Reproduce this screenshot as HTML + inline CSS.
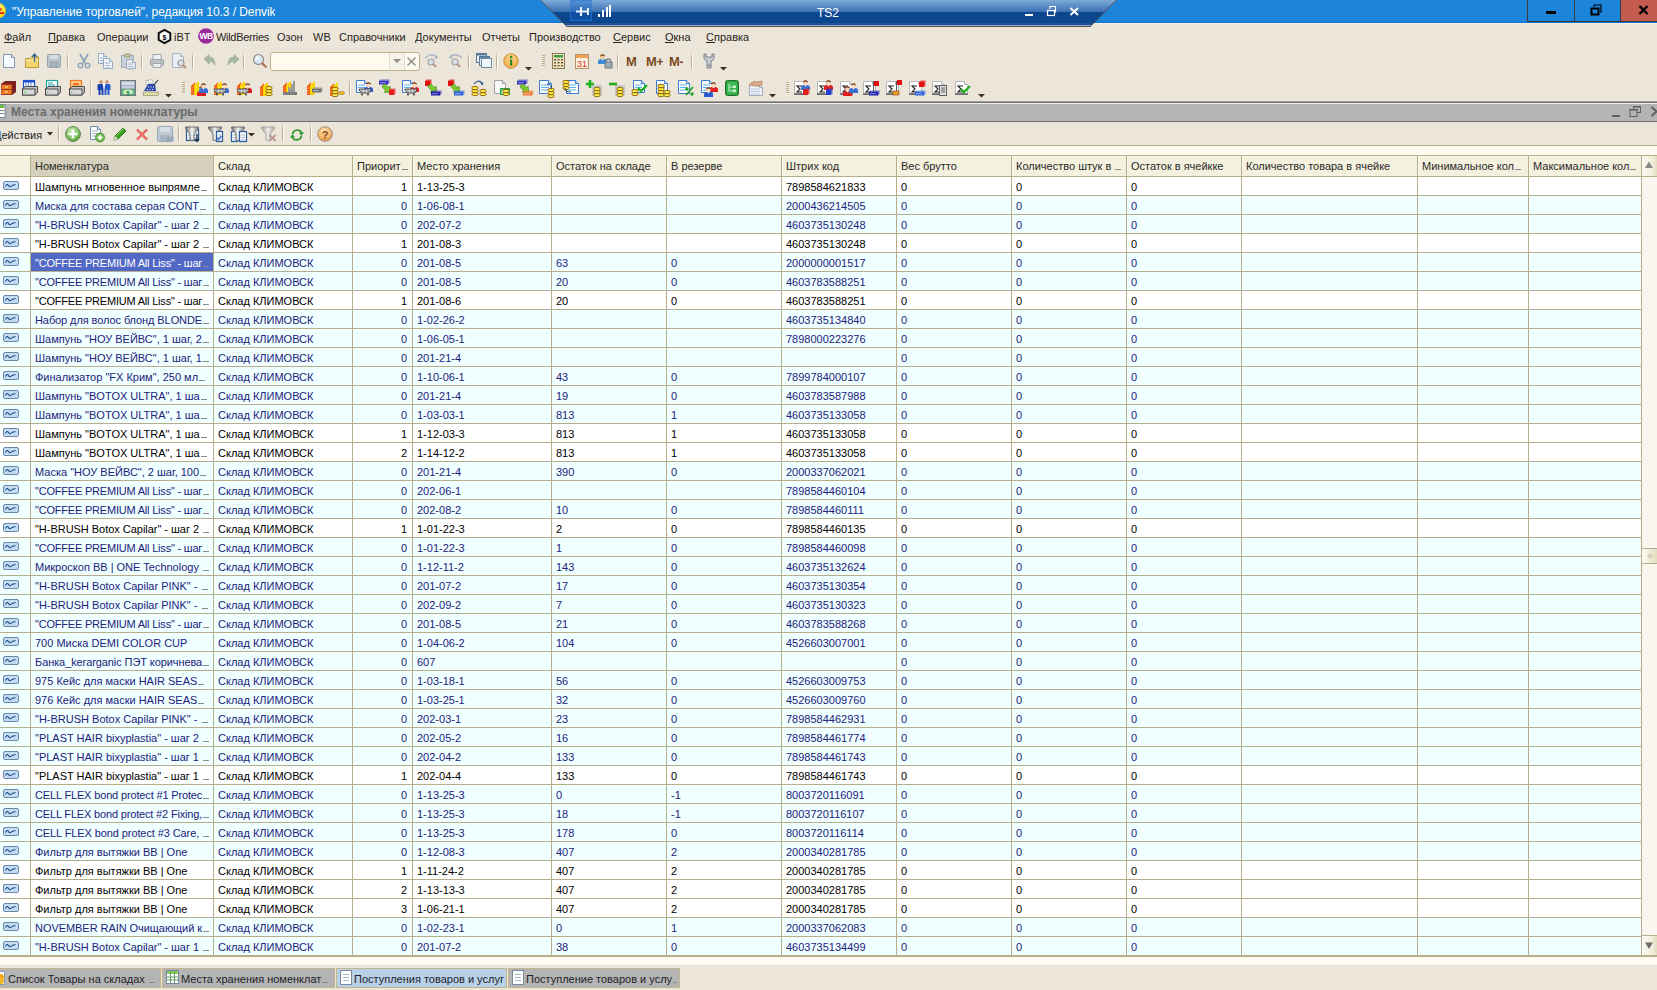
<!DOCTYPE html><html><head><meta charset="utf-8"><style>
*{margin:0;padding:0;box-sizing:border-box}
html,body{width:1657px;height:990px;overflow:hidden;background:#ECE6DA;font-family:"Liberation Sans",sans-serif;font-size:11px;color:#000}
.a{position:absolute}
.t{position:absolute;white-space:nowrap;overflow:hidden;line-height:19px}
svg{position:absolute;overflow:visible}
.el{display:inline-block;width:6px;height:1px;margin-left:1px;background:#8A8A8A;vertical-align:baseline}
</style></head><body>

<div class="a" style="left:0;top:0;width:1657px;height:22px;background:#1C84D9"></div>
<div class="a" style="left:0;top:22px;width:1657px;height:1px;background:#0D74CF"></div>
<div class="a" style="left:0;top:23px;width:1657px;height:1px;background:#F6EDDC"></div>
<svg style="left:0;top:0" width="12" height="22"><defs><radialGradient id="ai" cx="0.3" cy="0.25" r="0.8"><stop offset="0" stop-color="#FFF8B0"/><stop offset="1" stop-color="#FFD800"/></radialGradient></defs><circle cx="-2" cy="10.7" r="7.6" fill="url(#ai)" stroke="#D8C040" stroke-width="0.6"/><rect x="-6" y="12" width="10" height="2" fill="#E83010"/><ellipse cx="-0.3" cy="9.4" rx="2.2" ry="1.6" fill="#E85020"/></svg>
<div class="t" style="left:12px;top:1px;height:22px;line-height:22px;font-size:12px;color:#fff;letter-spacing:-0.07px">"Управление торговлей", редакция 10.3 / Denvik</div>
<svg style="left:540px;top:0" width="590" height="28">
<defs><linearGradient id="ts" x1="0" y1="0" x2="0" y2="27" gradientUnits="userSpaceOnUse">
<stop offset="0" stop-color="#7EAAD9"/><stop offset="0.44" stop-color="#3C71B3"/><stop offset="0.45" stop-color="#0B468F"/><stop offset="0.84" stop-color="#0B468F"/><stop offset="0.85" stop-color="#244F90"/><stop offset="1" stop-color="#244F90"/></linearGradient></defs>
<path d="M0,0 L577,0 L550,27 L27,27 Z" fill="url(#ts)"/>
<line x1="26" y1="25.5" x2="551" y2="25.5" stroke="#8EAED8" stroke-width="1"/>
<path d="M0.5,0 L27,26.5 L550,26.5 L576.5,0" fill="none" stroke="#4E4E4E" stroke-width="1"/>
<rect x="30.5" y="0.5" width="21" height="20" fill="#1060C8" fill-opacity="0.35" stroke="#2A7AD8" stroke-opacity="0.7" stroke-width="1"/>
<path d="M36,11.5 H48 M41,7 V16 M48,8 V15" stroke="#E8F0FA" stroke-width="2" fill="none"/>
<rect x="58" y="14" width="2" height="3" fill="#fff"/><rect x="62" y="10" width="2" height="7" fill="#fff"/><rect x="66" y="7" width="2" height="10" fill="#fff"/><rect x="69" y="5" width="2" height="12" fill="#fff"/>
<rect x="485" y="14" width="8" height="2" fill="#fff"/>
<rect x="507.5" y="10.5" width="7" height="5" fill="none" stroke="#fff" stroke-width="1.2"/><path d="M510,9 V6.5 H515.5 V12 H514" fill="none" stroke="#fff" stroke-width="1.2"/>
<path d="M530.5,8 L538,15 M538,8 L530.5,15" stroke="#fff" stroke-width="2"/>
</svg>
<div class="t" style="left:817px;top:1px;height:24px;line-height:24px;font-size:12px;color:#fff">TS2</div>
<div class="a" style="left:1527px;top:0;width:48px;height:22px;background:#1C84D9;border:1px solid #3A3A3A;border-top:none"></div>
<div class="a" style="left:1575px;top:0;width:46px;height:22px;background:#1C84D9;border:1px solid #3A3A3A;border-top:none;border-left:none"></div>
<div class="a" style="left:1621px;top:0;width:36px;height:22px;background:#C45B50;border-bottom:1px solid #3A3A3A"></div>
<div class="a" style="left:1546px;top:11px;width:10px;height:3px;background:#000"></div>
<svg style="left:1590px;top:4px" width="14" height="12"><rect x="1.5" y="4.5" width="7" height="6" fill="none" stroke="#000" stroke-width="2"/><path d="M4,3 V1 H11 V8 H10" fill="none" stroke="#000" stroke-width="1.2"/></svg>
<svg style="left:1638px;top:5px" width="12" height="10"><path d="M1.5,1 L9.5,9 M9.5,1 L1.5,9" stroke="#000" stroke-width="2.4"/></svg>
<div class="t" style="left:4px;top:28px;height:19px;line-height:19px;color:#2A241A;">Файл</div>
<div class="a" style="left:4px;top:42px;width:11px;height:1px;background:#2A241A"></div>
<div class="t" style="left:48px;top:28px;height:19px;line-height:19px;color:#2A241A;">Правка</div>
<div class="a" style="left:48px;top:42px;width:9px;height:1px;background:#2A241A"></div>
<div class="t" style="left:97px;top:28px;height:19px;line-height:19px;color:#2A241A;">Операции</div>
<div class="t" style="left:174px;top:28px;height:19px;line-height:19px;color:#2A241A;">iBT</div>
<div class="t" style="left:216px;top:28px;height:19px;line-height:19px;color:#2A241A;letter-spacing:-0.3px;">WildBerries</div>
<div class="t" style="left:277px;top:28px;height:19px;line-height:19px;color:#2A241A;">Озон</div>
<div class="t" style="left:313px;top:28px;height:19px;line-height:19px;color:#2A241A;">WB</div>
<div class="t" style="left:339px;top:28px;height:19px;line-height:19px;color:#2A241A;">Справочники</div>
<div class="t" style="left:415px;top:28px;height:19px;line-height:19px;color:#2A241A;">Документы</div>
<div class="t" style="left:482px;top:28px;height:19px;line-height:19px;color:#2A241A;">Отчеты</div>
<div class="t" style="left:529px;top:28px;height:19px;line-height:19px;color:#2A241A;">Производство</div>
<div class="t" style="left:613px;top:28px;height:19px;line-height:19px;color:#2A241A;">Сервис</div>
<div class="a" style="left:613px;top:42px;width:9px;height:1px;background:#2A241A"></div>
<div class="t" style="left:665px;top:28px;height:19px;line-height:19px;color:#2A241A;">Окна</div>
<div class="a" style="left:665px;top:42px;width:9px;height:1px;background:#2A241A"></div>
<div class="t" style="left:706px;top:28px;height:19px;line-height:19px;color:#2A241A;">Справка</div>
<div class="a" style="left:706px;top:42px;width:9px;height:1px;background:#2A241A"></div>
<svg style="left:157px;top:29px" width="15" height="15"><path d="M7.5,0.8 L13.3,4 L13.3,11 L7.5,14.2 L1.7,11 L1.7,4 Z" fill="#fff" stroke="#111" stroke-width="2"/><text x="7.5" y="10.5" font-size="7" text-anchor="middle" font-family="Liberation Sans" font-weight="bold">$</text></svg>
<svg style="left:198px;top:28px" width="16" height="16"><circle cx="8" cy="8" r="7.8" fill="#9B2A9E"/><text x="8" y="11.3" font-size="8.5" text-anchor="middle" fill="#fff" font-family="Liberation Sans" font-weight="bold" letter-spacing="-0.6">WB</text></svg>
<svg style="left:2px;top:53px" width="16" height="16" viewBox="0 0 16 16"><path d="M1.5,1.5 H9.5 L12.5,4.5 V14.5 H1.5Z" fill="#F6FAFE" stroke="#7E9AB8"/><path d="M9.5,1.5 V4.5 H12.5" fill="#D8E4F0" stroke="#7E9AB8"/></svg>
<svg style="left:24px;top:53px" width="16" height="16" viewBox="0 0 16 16"><path d="M1.5,5.5 H6 L7.5,4 H14.5 V14.5 H1.5Z" fill="#F2D46E" stroke="#BC9A3A"/><path d="M1.5,7.5 H14.5" stroke="#FBE9A8"/><path d="M10.5,9 V1.5 M8,4 L10.5,1 L13,4" fill="none" stroke="#3A6898" stroke-width="1.3"/></svg>
<svg style="left:46px;top:53px" width="16" height="16" viewBox="0 0 16 16"><rect x="1.5" y="1.5" width="13" height="13" rx="1" fill="#B9C4CC" stroke="#9AA6AE"/><rect x="4" y="2" width="8" height="4" fill="#D4DCE2"/><rect x="4" y="9" width="8" height="5" fill="#A9B4BC" stroke="#98A4AC"/></svg>
<div class="a" style="left:67px;top:52px;width:1px;height:20px;background:linear-gradient(#ECE6DA,#B8AE8C 30%,#B8AE8C 70%,#ECE6DA)"></div><div class="a" style="left:68px;top:52px;width:1px;height:20px;background:linear-gradient(#ECE6DA,#FFFFFF 30%,#FFFFFF 70%,#ECE6DA)"></div>
<svg style="left:76px;top:53px" width="16" height="16" viewBox="0 0 16 16"><path d="M4,1 L9,10 M12,1 L7,10" stroke="#8FA4B8" stroke-width="1.8"/><circle cx="4.5" cy="12.5" r="2.3" fill="none" stroke="#8FA4B8" stroke-width="1.4"/><circle cx="11.5" cy="12.5" r="2.3" fill="none" stroke="#8FA4B8" stroke-width="1.4"/></svg>
<svg style="left:97px;top:53px" width="16" height="16" viewBox="0 0 16 16"><path d="M1.5,0.5 H6.5 L9.5,3.5 V10.5 H1.5Z" fill="#F4F8FC" stroke="#98AEC4"/><path d="M6.5,0.5 V3.5 H9.5" fill="#D8E4F0" stroke="#98AEC4"/><path d="M3,5.0 H7" stroke="#98AEC4" stroke-width="1"/><path d="M3,7.5 H7" stroke="#98AEC4" stroke-width="1"/><path d="M3,10.0 H7" stroke="#98AEC4" stroke-width="1"/><path d="M6.5,5.5 H12.5 L15.5,8.5 V15.5 H6.5Z" fill="#F4F8FC" stroke="#98AEC4"/><path d="M12.5,5.5 V8.5 H15.5" fill="#D8E4F0" stroke="#98AEC4"/><path d="M8,10.0 H13" stroke="#98AEC4" stroke-width="1"/><path d="M8,12.5 H13" stroke="#98AEC4" stroke-width="1"/><path d="M8,15.0 H13" stroke="#98AEC4" stroke-width="1"/></svg>
<svg style="left:120px;top:53px" width="16" height="16" viewBox="0 0 16 16"><rect x="1.5" y="2.5" width="12" height="12" fill="#C8D2DA" stroke="#9AAAB8"/><rect x="5" y="1" width="5" height="3" fill="#D8C8A0" stroke="#9A9A80"/><path d="M6.5,6.5 H12.5 L15.5,9.5 V15.5 H6.5Z" fill="#E4EAF0" stroke="#9AAAB8"/><path d="M12.5,6.5 V9.5 H15.5" fill="#D8E4F0" stroke="#9AAAB8"/><path d="M8,11.0 H13" stroke="#B0BCC8" stroke-width="1"/><path d="M8,13.5 H13" stroke="#B0BCC8" stroke-width="1"/><path d="M8,16.0 H13" stroke="#B0BCC8" stroke-width="1"/></svg>
<div class="a" style="left:141px;top:52px;width:1px;height:20px;background:linear-gradient(#ECE6DA,#B8AE8C 30%,#B8AE8C 70%,#ECE6DA)"></div><div class="a" style="left:142px;top:52px;width:1px;height:20px;background:linear-gradient(#ECE6DA,#FFFFFF 30%,#FFFFFF 70%,#ECE6DA)"></div>
<svg style="left:149px;top:53px" width="16" height="16" viewBox="0 0 16 16"><rect x="4" y="1.5" width="8" height="5" fill="#F0F0F0" stroke="#A0A8B0"/><rect x="1.5" y="6.5" width="13" height="6" rx="1" fill="#C0C4C8" stroke="#9AA0A8"/><rect x="4" y="10.5" width="8" height="4" fill="#F0F0F0" stroke="#A0A8B0"/><circle cx="12" cy="8.5" r="0.7" fill="#6C6"/></svg>
<svg style="left:171px;top:53px" width="16" height="16" viewBox="0 0 16 16"><path d="M1.5,0.5 H9.5 L12.5,3.5 V14.5 H1.5Z" fill="#E8EEF2" stroke="#A8B6C4"/><path d="M9.5,0.5 V3.5 H12.5" fill="#D8E4F0" stroke="#A8B6C4"/><circle cx="10" cy="10" r="3" fill="#D8E4EE" stroke="#A09080" stroke-width="1.2"/><path d="M12,12 L15,15" stroke="#C09070" stroke-width="2"/></svg>
<div class="a" style="left:192px;top:52px;width:1px;height:20px;background:linear-gradient(#ECE6DA,#B8AE8C 30%,#B8AE8C 70%,#ECE6DA)"></div><div class="a" style="left:193px;top:52px;width:1px;height:20px;background:linear-gradient(#ECE6DA,#FFFFFF 30%,#FFFFFF 70%,#ECE6DA)"></div>
<svg style="left:203px;top:53px" width="16" height="16" viewBox="0 0 16 16"><path d="M1,6 L6,1.5 V4 Q12,4 12,12 Q10,8 6,8.5 V11Z" fill="#A8B8A0" stroke="#98A890" stroke-width="0.6"/></svg>
<svg style="left:224px;top:53px" width="16" height="16" viewBox="0 0 16 16"><path d="M15,6 L10,1.5 V4 Q4,4 4,12 Q6,8 10,8.5 V11Z" fill="#A8B8A0" stroke="#98A890" stroke-width="0.6"/></svg>
<div class="a" style="left:243px;top:52px;width:1px;height:20px;background:linear-gradient(#ECE6DA,#B8AE8C 30%,#B8AE8C 70%,#ECE6DA)"></div><div class="a" style="left:244px;top:52px;width:1px;height:20px;background:linear-gradient(#ECE6DA,#FFFFFF 30%,#FFFFFF 70%,#ECE6DA)"></div>
<svg style="left:252px;top:53px" width="16" height="16" viewBox="0 0 16 16"><circle cx="6.5" cy="6.5" r="5" fill="#D6E6F6" stroke="#9A8A80" stroke-width="1.2"/><circle cx="5.5" cy="5" r="2" fill="#F4F8FC"/><path d="M10,10 L14.5,14.5" stroke="#B07A58" stroke-width="2.4"/></svg>
<div class="a" style="left:270px;top:52px;width:150px;height:19px;background:#FFFBEF;border:1px solid #BDB08A;border-radius:3px"></div>
<div class="a" style="left:389px;top:53px;width:1px;height:17px;background:#E0DAC8"></div>
<div class="a" style="left:390px;top:53px;width:14px;height:17px;background:#F6F3EA"></div>
<div class="a" style="left:404px;top:53px;width:1px;height:17px;background:#E0DAC8"></div>
<svg style="left:393px;top:59px" width="8" height="5"><path d="M0,0 H8 L4,4Z" fill="#989080"/></svg>
<svg style="left:406px;top:56px" width="11" height="11"><path d="M1.5,1.5 L9.5,9.5 M9.5,1.5 L1.5,9.5" stroke="#8A8A8A" stroke-width="1.4"/></svg>
<svg style="left:424px;top:53px" width="16" height="16" viewBox="0 0 16 16"><path d="M1,5 Q7,-1 13,4" fill="none" stroke="#A6B8C8" stroke-width="1.6"/><path d="M11,1.5 L14.5,4.5 L11,6" fill="#A6B8C8"/><circle cx="7" cy="9" r="3" fill="#D8E0E8" stroke="#A0A0A0" stroke-width="1.1"/><path d="M9,11 L12,14" stroke="#B89880" stroke-width="1.8"/></svg>
<svg style="left:447px;top:53px" width="16" height="16" viewBox="0 0 16 16"><path d="M15,5 Q9,-1 3,4" fill="none" stroke="#A6B8C8" stroke-width="1.6"/><path d="M5,1.5 L1.5,4.5 L5,6" fill="#A6B8C8"/><circle cx="8" cy="9" r="3" fill="#D8E0E8" stroke="#A0A0A0" stroke-width="1.1"/><path d="M10,11 L13,14" stroke="#B89880" stroke-width="1.8"/></svg>
<div class="a" style="left:468px;top:52px;width:1px;height:20px;background:linear-gradient(#ECE6DA,#B8AE8C 30%,#B8AE8C 70%,#ECE6DA)"></div><div class="a" style="left:469px;top:52px;width:1px;height:20px;background:linear-gradient(#ECE6DA,#FFFFFF 30%,#FFFFFF 70%,#ECE6DA)"></div>
<svg style="left:476px;top:53px" width="16" height="16" viewBox="0 0 16 16"><rect x="0.5" y="0.5" width="10" height="9" fill="#E8F0F8" stroke="#5A7A9A"/><rect x="0.5" y="0.5" width="10" height="2" fill="#5A7A9A"/><rect x="3.5" y="3.5" width="10" height="9" fill="#E8F0F8" stroke="#5A7A9A"/><rect x="3.5" y="3.5" width="10" height="2" fill="#5A7A9A"/><rect x="5.5" y="5.5" width="10" height="9" fill="#F0F6FC" stroke="#6A8AAA"/></svg>
<div class="a" style="left:496px;top:52px;width:1px;height:20px;background:linear-gradient(#ECE6DA,#B8AE8C 30%,#B8AE8C 70%,#ECE6DA)"></div><div class="a" style="left:497px;top:52px;width:1px;height:20px;background:linear-gradient(#ECE6DA,#FFFFFF 30%,#FFFFFF 70%,#ECE6DA)"></div>
<svg style="left:503px;top:53px" width="16" height="16" viewBox="0 0 16 16"><circle cx="8" cy="8" r="7.2" fill="#F2B858" stroke="#C88A30"/><circle cx="8" cy="6" r="5" fill="#F8D090" opacity="0.6"/><rect x="7" y="6.5" width="2.2" height="6" fill="#2A8A2A"/><circle cx="8.1" cy="4" r="1.2" fill="#2A8A2A"/></svg>
<svg style="left:525px;top:67px" width="7" height="4"><path d="M0,0 H7 L3.5,3.5Z" fill="#3A2E1E"/></svg>
<div class="a" style="left:536px;top:51px;width:1px;height:1px;background:#C8C0A8"></div>
<div class="a" style="left:536px;top:72px;width:1px;height:1px;background:#C8C0A8"></div>
<div class="a" style="left:542px;top:55px;width:3px;height:1px;background:#B8B088"></div><div class="a" style="left:542px;top:57px;width:3px;height:1px;background:#B8B088"></div><div class="a" style="left:542px;top:59px;width:3px;height:1px;background:#B8B088"></div><div class="a" style="left:542px;top:61px;width:3px;height:1px;background:#B8B088"></div><div class="a" style="left:542px;top:63px;width:3px;height:1px;background:#B8B088"></div><div class="a" style="left:542px;top:65px;width:3px;height:1px;background:#B8B088"></div>
<svg style="left:551px;top:53px" width="16" height="16" viewBox="0 0 16 16"><rect x="1.5" y="0.5" width="12" height="15" fill="#F2E4C0" stroke="#8A7A5A"/><rect x="3" y="2" width="9" height="2.5" fill="#3AA03A"/><g fill="#6A5A3A"><rect x="3" y="6" width="2" height="1.5"/><rect x="6.5" y="6" width="2" height="1.5"/><rect x="10" y="6" width="2" height="1.5"/><rect x="3" y="9" width="2" height="1.5"/><rect x="6.5" y="9" width="2" height="1.5"/><rect x="10" y="9" width="2" height="1.5"/><rect x="3" y="12" width="2" height="1.5"/><rect x="6.5" y="12" width="2" height="1.5"/><rect x="10" y="12" width="2" height="1.5"/></g></svg>
<svg style="left:574px;top:53px" width="16" height="16" viewBox="0 0 16 16"><rect x="1.5" y="1.5" width="13" height="14" fill="#FAF0E0" stroke="#B8906A"/><rect x="2" y="2" width="12" height="3" fill="#F0A050"/><text x="8" y="14" font-size="9" text-anchor="middle" font-family="Liberation Sans" fill="#E03018">31</text></svg>
<svg style="left:597px;top:53px" width="16" height="16" viewBox="0 0 16 16"><path d="M1,11 V8.5 Q1,6 4,6 H7 Q10,6 10,8.5 V11Z" fill="#3A8AD8"/><path d="M4.2,6 L5.5,7.5 L6.8,6Z" fill="#fff"/><circle cx="5.5" cy="3.8" r="2.4" fill="#F4C890"/><path d="M3,4 Q3,1.2 5.5,1.2 Q8,1.2 8,4 L7.3,3 Q5.5,2.2 3.7,3Z" fill="#6A3A10"/><rect x="8" y="9" width="7" height="6" fill="#A0A8B0" stroke="#707880"/><path d="M9.5,9 V7 Q11.5,5 13.5,7 V9" fill="none" stroke="#707880" stroke-width="1.2"/></svg>
<div class="a" style="left:617px;top:52px;width:1px;height:20px;background:linear-gradient(#ECE6DA,#B8AE8C 30%,#B8AE8C 70%,#ECE6DA)"></div><div class="a" style="left:618px;top:52px;width:1px;height:20px;background:linear-gradient(#ECE6DA,#FFFFFF 30%,#FFFFFF 70%,#ECE6DA)"></div>
<div class="t" style="left:626px;top:52px;height:19px;line-height:19px;font-size:13px;font-weight:bold;color:#7A4A20">M</div>
<div class="t" style="left:646px;top:52px;height:19px;line-height:19px;font-size:13px;font-weight:bold;color:#7A4A20;letter-spacing:-0.5px">M+</div>
<div class="t" style="left:669px;top:52px;height:19px;line-height:19px;font-size:13px;font-weight:bold;color:#7A4A20;letter-spacing:-0.5px">M-</div>
<div class="a" style="left:691px;top:52px;width:1px;height:20px;background:linear-gradient(#ECE6DA,#B8AE8C 30%,#B8AE8C 70%,#ECE6DA)"></div><div class="a" style="left:692px;top:52px;width:1px;height:20px;background:linear-gradient(#ECE6DA,#FFFFFF 30%,#FFFFFF 70%,#ECE6DA)"></div>
<svg style="left:701px;top:53px" width="16" height="16" viewBox="0 0 16 16"><path d="M3,1 V5 Q3,7 6,8 V15 H10 V8 Q13,7 13,5 V1 L11,1 V4 H5 V1Z" fill="#C8CCD0" stroke="#7A8088" stroke-width="1"/><circle cx="8" cy="12.5" r="1" fill="#7A8088"/></svg>
<svg style="left:720px;top:67px" width="7" height="4"><path d="M0,0 H7 L3.5,3.5Z" fill="#3A2E1E"/></svg>
<div class="a" style="left:732px;top:51px;width:1px;height:1px;background:#C8C0A8"></div>
<div class="a" style="left:732px;top:72px;width:1px;height:1px;background:#C8C0A8"></div>
<svg style="left:0px;top:80px" width="16" height="16" viewBox="0 0 16 16"><path d="M1,4 L5,1 H16 V12 L12,15 H1Z" fill="#7A2020"/><rect x="1" y="4" width="11" height="11" fill="#A03A28"/><rect x="1.5" y="5" width="10" height="4" fill="#F07A20"/><rect x="1.5" y="10" width="10" height="4" fill="#F07A20"/><rect x="5" y="6.5" width="3" height="1" fill="#FFE0A0"/><rect x="5" y="11.5" width="3" height="1" fill="#FFE0A0"/></svg>
<svg style="left:22px;top:80px" width="16" height="16" viewBox="0 0 16 16"><rect x="1.5" y="0.5" width="11" height="7" fill="#FFFFFF" stroke="#2050D0" stroke-width="1.2"/><path d="M4,2 V7 M6.5,2 V7 M9,2 V7" stroke="#6A8AE0"/><rect x="1.5" y="0.5" width="11" height="2" fill="#2050D0"/><path d="M0.5,9 L3,6.5 H15.5 V12.5 L13,15 H0.5Z" fill="#C0C0C0" stroke="#303030" stroke-width="0.8"/><rect x="0.5" y="9" width="12.5" height="6" fill="#D8D8D8" stroke="#303030" stroke-width="0.8"/><rect x="2" y="12" width="1.5" height="1" fill="#3C3"/></svg>
<svg style="left:45px;top:80px" width="16" height="16" viewBox="0 0 16 16"><rect x="1.5" y="0.5" width="11" height="7" fill="#FFFFFF" stroke="#20A0A0" stroke-width="1.2"/><path d="M3,3 H8 M3,5 H10" stroke="#20A0A0" stroke-width="1.2"/><path d="M0.5,9 L3,6.5 H15.5 V12.5 L13,15 H0.5Z" fill="#C0C0C0" stroke="#303030" stroke-width="0.8"/><rect x="0.5" y="9" width="12.5" height="6" fill="#D8D8D8" stroke="#303030" stroke-width="0.8"/><rect x="2" y="12" width="1.5" height="1" fill="#3C3"/></svg>
<svg style="left:69px;top:80px" width="16" height="16" viewBox="0 0 16 16"><rect x="1.5" y="0.5" width="11" height="7" fill="#F8C890" stroke="#F07A20" stroke-width="1.2"/><rect x="4" y="3" width="6" height="2.5" fill="#F07A20"/><path d="M0.5,9 L3,6.5 H15.5 V12.5 L13,15 H0.5Z" fill="#C0C0C0" stroke="#303030" stroke-width="0.8"/><rect x="0.5" y="9" width="12.5" height="6" fill="#D8D8D8" stroke="#303030" stroke-width="0.8"/><rect x="2" y="12" width="1.5" height="1" fill="#3C3"/></svg>
<div class="a" style="left:90px;top:78px;width:1px;height:20px;background:linear-gradient(#ECE6DA,#B8AE8C 30%,#B8AE8C 70%,#ECE6DA)"></div><div class="a" style="left:91px;top:78px;width:1px;height:20px;background:linear-gradient(#ECE6DA,#FFFFFF 30%,#FFFFFF 70%,#ECE6DA)"></div>
<svg style="left:97px;top:80px" width="16" height="16" viewBox="0 0 16 16"><circle cx="4" cy="2" r="1.8" fill="#C8906A"/><circle cx="10" cy="2" r="1.8" fill="#C8906A"/><path d="M0.5,5 Q0.5,4 2,4 H6.5 V15 H4.5 V10 H3.5 V15 H1.5 V10 H0.5Z" fill="#1A40B0"/><path d="M13.5,5 Q13.5,4 12,4 H7.5 V15 H9.5 V10 H10.5 V15 H12.5 V10 H13.5Z" fill="#2A5AD0"/><path d="M5.5,4 L7,9 L8.5,4" fill="#fff"/></svg>
<svg style="left:120px;top:80px" width="16" height="16" viewBox="0 0 16 16"><rect x="0.5" y="0.5" width="15" height="15" fill="#8A9AA0" stroke="#6A7A80"/><rect x="1.5" y="1.5" width="13" height="3.5" rx="1" fill="#D8D8E8"/><rect x="1.5" y="5.5" width="13" height="3" rx="1" fill="#C8C8E0"/><rect x="1.5" y="9" width="13" height="6" fill="#60B070"/><ellipse cx="8" cy="12" rx="5" ry="2.5" fill="#C8F0C8"/><text x="8" y="14.5" font-size="6" text-anchor="middle" fill="#208030" font-family="Liberation Sans" font-weight="bold">$</text></svg>
<svg style="left:143px;top:80px" width="16" height="16" viewBox="0 0 16 16"><rect x="3" y="0.5" width="5" height="4" fill="#fff" stroke="#999" stroke-width="0.5"/><path d="M1,11 L5,4 H12 L13,11Z" fill="#2A4AB0"/><g fill="#fff"><rect x="5" y="6.5" width="1" height="1"/><rect x="7.5" y="6.5" width="1" height="1"/><rect x="10" y="6.5" width="1" height="1"/><rect x="4" y="9" width="1" height="1"/><rect x="6.5" y="9" width="1" height="1"/><rect x="9" y="9" width="1" height="1"/></g><rect x="0.5" y="12" width="15" height="3.5" fill="#E0DCA8" stroke="#808060" stroke-width="0.6"/><path d="M11,5 L15,0" stroke="#3A3A3A" stroke-width="1.2"/><rect x="5" y="0" width="5" height="3" fill="#fff" stroke="#888" stroke-width="0.5"/></svg>
<svg style="left:165px;top:94px" width="7" height="4"><path d="M0,0 H7 L3.5,3.5Z" fill="#3A2E1E"/></svg>
<div class="a" style="left:176px;top:77px;width:1px;height:1px;background:#C8C0A8"></div>
<div class="a" style="left:176px;top:98px;width:1px;height:1px;background:#C8C0A8"></div>
<div class="a" style="left:182px;top:82px;width:3px;height:1px;background:#B8B088"></div><div class="a" style="left:182px;top:84px;width:3px;height:1px;background:#B8B088"></div><div class="a" style="left:182px;top:86px;width:3px;height:1px;background:#B8B088"></div><div class="a" style="left:182px;top:88px;width:3px;height:1px;background:#B8B088"></div><div class="a" style="left:182px;top:90px;width:3px;height:1px;background:#B8B088"></div><div class="a" style="left:182px;top:92px;width:3px;height:1px;background:#B8B088"></div>
<svg style="left:190px;top:80px" width="16" height="16" viewBox="0 0 16 16"><path d="M1,6 L5,2 V15 H1Z" fill="#F06010"/><path d="M4,5 L9,1 V14 L7.5,15 H4Z" fill="#F8D000"/><path d="M5,7 H7 M5,9.5 H7 M5,12 H7" stroke="#FFFF20" stroke-width="1.2"/><path d="M1.5,8 H3 M1.5,10.5 H3 M1.5,13 H3" stroke="#FFB080" stroke-width="0.8"/><path d="M1.5,5.5 L4.5,2.5 M5,4.5 L8.5,1.5" stroke="#FFE8A0" stroke-width="0.9" stroke-dasharray="1,1"/><path d="M7,16 V13.5 Q7,11 10,11 H13 Q16,11 16,13.5 V16Z" fill="#E02020"/><path d="M10.2,11 L11.5,12.5 L12.8,11Z" fill="#fff"/><circle cx="11.5" cy="8.8" r="2.4" fill="#FCD8B8"/><path d="M9,9 Q9,6.2 11.5,6.2 Q14,6.2 14,9 L13.3,8 Q11.5,7.2 9.7,8Z" fill="#6A2A10"/><path d="M9,13 V10.5 Q9,8 12,8 H15 Q18,8 18,10.5 V13Z" fill="#3A6ED0"/><path d="M12.2,8 L13.5,9.5 L14.8,8Z" fill="#fff"/><circle cx="13.5" cy="5.8" r="2.4" fill="#FCD8B8"/><path d="M11,6 Q11,3.2 13.5,3.2 Q16,3.2 16,6 L15.3,5 Q13.5,4.2 11.7,5Z" fill="#6A2A10"/></svg>
<svg style="left:213px;top:80px" width="16" height="16" viewBox="0 0 16 16"><path d="M1,6 L5,2 V15 H1Z" fill="#F06010"/><path d="M4,5 L9,1 V14 L7.5,15 H4Z" fill="#F8D000"/><path d="M5,7 H7 M5,9.5 H7 M5,12 H7" stroke="#FFFF20" stroke-width="1.2"/><path d="M1.5,8 H3 M1.5,10.5 H3 M1.5,13 H3" stroke="#FFB080" stroke-width="0.8"/><path d="M1.5,5.5 L4.5,2.5 M5,4.5 L8.5,1.5" stroke="#FFE8A0" stroke-width="0.9" stroke-dasharray="1,1"/><path d="M7,13 V10.5 Q7,8 10,8 H13 Q16,8 16,10.5 V13Z" fill="#3A6ED0"/><path d="M10.2,8 L11.5,9.5 L12.8,8Z" fill="#fff"/><circle cx="11.5" cy="5.8" r="2.4" fill="#FCD8B8"/><path d="M9,6 Q9,3.2 11.5,3.2 Q14,3.2 14,6 L13.3,5 Q11.5,4.2 9.7,5Z" fill="#6A2A10"/><path d="M1,9 H13 L11,13 H3Z" fill="#E8E8E8" stroke="#505050" stroke-width="1"/><path d="M4,9 V13 M7,9 V13 M10,9 V13" stroke="#505050" stroke-width="0.8"/><circle cx="4" cy="14.5" r="1" fill="#404040"/><circle cx="10" cy="14.5" r="1" fill="#404040"/></svg>
<svg style="left:236px;top:80px" width="16" height="16" viewBox="0 0 16 16"><path d="M1,6 L5,2 V15 H1Z" fill="#F06010"/><path d="M4,5 L9,1 V14 L7.5,15 H4Z" fill="#F8D000"/><path d="M5,7 H7 M5,9.5 H7 M5,12 H7" stroke="#FFFF20" stroke-width="1.2"/><path d="M1.5,8 H3 M1.5,10.5 H3 M1.5,13 H3" stroke="#FFB080" stroke-width="0.8"/><path d="M1.5,5.5 L4.5,2.5 M5,4.5 L8.5,1.5" stroke="#FFE8A0" stroke-width="0.9" stroke-dasharray="1,1"/><path d="M7,13 V10.5 Q7,8 10,8 H13 Q16,8 16,10.5 V13Z" fill="#E02020"/><path d="M10.2,8 L11.5,9.5 L12.8,8Z" fill="#fff"/><circle cx="11.5" cy="5.8" r="2.4" fill="#FCD8B8"/><path d="M9,6 Q9,3.2 11.5,3.2 Q14,3.2 14,6 L13.3,5 Q11.5,4.2 9.7,5Z" fill="#6A2A10"/><path d="M1,9 H13 L11,13 H3Z" fill="#E8E8E8" stroke="#505050" stroke-width="1"/><path d="M4,9 V13 M7,9 V13 M10,9 V13" stroke="#505050" stroke-width="0.8"/><circle cx="4" cy="14.5" r="1" fill="#404040"/><circle cx="10" cy="14.5" r="1" fill="#404040"/></svg>
<svg style="left:259px;top:80px" width="16" height="16" viewBox="0 0 16 16"><path d="M1,7 L5,3 V16 H1Z" fill="#F06010"/><path d="M4,6 L9,2 V15 L7.5,16 H4Z" fill="#F8D000"/><path d="M5,8 H7 M5,10.5 H7 M5,13 H7" stroke="#FFFF20" stroke-width="1.2"/><path d="M1.5,9 H3 M1.5,11.5 H3 M1.5,14 H3" stroke="#FFB080" stroke-width="0.8"/><path d="M1.5,6.5 L4.5,3.5 M5,5.5 L8.5,2.5" stroke="#FFE8A0" stroke-width="0.9" stroke-dasharray="1,1"/><ellipse cx="10" cy="14" rx="3.2" ry="1.7" fill="#F8E020" stroke="#7A4A00" stroke-width="0.8"/><path d="M7.5,14.3 H12.5" stroke="#FFF8A0" stroke-width="0.6"/><ellipse cx="10" cy="11" rx="3.2" ry="1.7" fill="#F8E020" stroke="#7A4A00" stroke-width="0.8"/><path d="M7.5,11.3 H12.5" stroke="#FFF8A0" stroke-width="0.6"/><ellipse cx="10" cy="8" rx="3.2" ry="1.7" fill="#F8E020" stroke="#7A4A00" stroke-width="0.8"/><path d="M7.5,8.3 H12.5" stroke="#FFF8A0" stroke-width="0.6"/></svg>
<svg style="left:282px;top:80px" width="16" height="16" viewBox="0 0 16 16"><path d="M1,6 L5,2 V15 H1Z" fill="#F06010"/><path d="M4,5 L9,1 V14 L7.5,15 H4Z" fill="#F8D000"/><path d="M5,7 H7 M5,9.5 H7 M5,12 H7" stroke="#FFFF20" stroke-width="1.2"/><path d="M1.5,8 H3 M1.5,10.5 H3 M1.5,13 H3" stroke="#FFB080" stroke-width="0.8"/><path d="M1.5,5.5 L4.5,2.5 M5,4.5 L8.5,1.5" stroke="#FFE8A0" stroke-width="0.9" stroke-dasharray="1,1"/><path d="M6,15 V6 L9,9 V3 L11,5 V1 H13 V15Z" fill="#9A9A9A"/><rect x="1" y="12" width="14" height="3" fill="#707070"/><path d="M3,12 V15 M6,12 V15 M9,12 V15 M12,12 V15" stroke="#C0C0C0" stroke-width="0.6"/></svg>
<svg style="left:306px;top:80px" width="16" height="16" viewBox="0 0 16 16"><path d="M1,6 L5,2 V15 H1Z" fill="#F06010"/><path d="M4,5 L9,1 V14 L7.5,15 H4Z" fill="#F8D000"/><path d="M5,7 H7 M5,9.5 H7 M5,12 H7" stroke="#FFFF20" stroke-width="1.2"/><path d="M1.5,8 H3 M1.5,10.5 H3 M1.5,13 H3" stroke="#FFB080" stroke-width="0.8"/><path d="M1.5,5.5 L4.5,2.5 M5,4.5 L8.5,1.5" stroke="#FFE8A0" stroke-width="0.9" stroke-dasharray="1,1"/><rect x="6" y="9" width="9" height="3.5" fill="#707070"/><path d="M6,9 l1.5,-1.5 h9 v3.5 l-1.5,1.5" fill="#707070" opacity="0.6"/><rect x="7.5" y="10.2" width="1" height="1" fill="#fff"/><rect x="9.5" y="10.2" width="1" height="1" fill="#fff"/><rect x="11.5" y="10.2" width="1" height="1" fill="#fff"/></svg>
<svg style="left:329px;top:80px" width="16" height="16" viewBox="0 0 16 16"><path d="M1,7 L5,3 V16 H1Z" fill="#F06010"/><path d="M4,6 L9,2 V15 L7.5,16 H4Z" fill="#F8D000"/><path d="M5,8 H7 M5,10.5 H7 M5,13 H7" stroke="#FFFF20" stroke-width="1.2"/><path d="M1.5,9 H3 M1.5,11.5 H3 M1.5,14 H3" stroke="#FFB080" stroke-width="0.8"/><path d="M1.5,6.5 L4.5,3.5 M5,5.5 L8.5,2.5" stroke="#FFE8A0" stroke-width="0.9" stroke-dasharray="1,1"/><ellipse cx="6" cy="15" rx="3.2" ry="1.7" fill="#F8E020" stroke="#7A4A00" stroke-width="0.8"/><path d="M3.5,15.3 H8.5" stroke="#FFF8A0" stroke-width="0.6"/><ellipse cx="6" cy="12" rx="3.2" ry="1.7" fill="#F8E020" stroke="#7A4A00" stroke-width="0.8"/><path d="M3.5,12.3 H8.5" stroke="#FFF8A0" stroke-width="0.6"/><ellipse cx="6" cy="9" rx="3.2" ry="1.7" fill="#F8E020" stroke="#7A4A00" stroke-width="0.8"/><path d="M3.5,9.3 H8.5" stroke="#FFF8A0" stroke-width="0.6"/><ellipse cx="12.5" cy="13" rx="3" ry="1.6" fill="#E8B830" stroke="#A07010" stroke-width="0.6"/></svg>
<div class="a" style="left:349px;top:78px;width:1px;height:20px;background:linear-gradient(#ECE6DA,#B8AE8C 30%,#B8AE8C 70%,#ECE6DA)"></div><div class="a" style="left:350px;top:78px;width:1px;height:20px;background:linear-gradient(#ECE6DA,#FFFFFF 30%,#FFFFFF 70%,#ECE6DA)"></div>
<svg style="left:356px;top:80px" width="16" height="16" viewBox="0 0 16 16"><path d="M0.5,0.5 H8.5 L11.5,3.5 V12.5 H0.5Z" fill="#FFFFFF" stroke="#3A7AD0"/><path d="M8.5,0.5 V3.5 H11.5" fill="#D8E4F0" stroke="#3A7AD0"/><path d="M2,5.0 H9" stroke="#5AB0F0" stroke-width="1"/><path d="M2,7.5 H9" stroke="#5AB0F0" stroke-width="1"/><path d="M2,10.0 H9" stroke="#5AB0F0" stroke-width="1"/><path d="M8,12 V9.5 Q8,7 11,7 H14 Q17,7 17,9.5 V12Z" fill="#2A5AD0"/><path d="M11.2,7 L12.5,8.5 L13.8,7Z" fill="#fff"/><circle cx="12.5" cy="4.8" r="2.4" fill="#FCD8B8"/><path d="M10,5 Q10,2.2 12.5,2.2 Q15,2.2 15,5 L14.3,4 Q12.5,3.2 10.7,4Z" fill="#6A2A10"/><path d="M3,9 H15 L13,13 H5Z" fill="#E8E8E8" stroke="#505050" stroke-width="1"/><path d="M6,9 V13 M9,9 V13 M12,9 V13" stroke="#505050" stroke-width="0.8"/><circle cx="6" cy="14.5" r="1" fill="#404040"/><circle cx="12" cy="14.5" r="1" fill="#404040"/></svg>
<svg style="left:379px;top:80px" width="16" height="16" viewBox="0 0 16 16"><rect x="0" y="1" width="9" height="3.5" fill="#3030C0"/><path d="M0,1 l1.5,-1.5 h9 v3.5 l-1.5,1.5" fill="#3030C0" opacity="0.6"/><rect x="1.5" y="2.2" width="1" height="1" fill="#fff"/><rect x="3.5" y="2.2" width="1" height="1" fill="#fff"/><rect x="5.5" y="2.2" width="1" height="1" fill="#fff"/><path d="M4,5 L6,4 L10,8 L11,6 L12,13 L5,12 L7,11 L3,7Z" fill="#7CC830" stroke="#3A8A10" stroke-width="0.6"/><rect x="10" y="10" width="5" height="5" fill="#E02020"/><path d="M10,10 l1.5,-1.5 h5 v5 l-1.5,1.5" fill="#E02020" opacity="0.7"/></svg>
<svg style="left:402px;top:80px" width="16" height="16" viewBox="0 0 16 16"><path d="M0.5,0.5 H8.5 L11.5,3.5 V12.5 H0.5Z" fill="#FFFFFF" stroke="#3A7AD0"/><path d="M8.5,0.5 V3.5 H11.5" fill="#D8E4F0" stroke="#3A7AD0"/><path d="M2,5.0 H9" stroke="#5AB0F0" stroke-width="1"/><path d="M2,7.5 H9" stroke="#5AB0F0" stroke-width="1"/><path d="M2,10.0 H9" stroke="#5AB0F0" stroke-width="1"/><path d="M8,12 V9.5 Q8,7 11,7 H14 Q17,7 17,9.5 V12Z" fill="#E02020"/><path d="M11.2,7 L12.5,8.5 L13.8,7Z" fill="#fff"/><circle cx="12.5" cy="4.8" r="2.4" fill="#FCD8B8"/><path d="M10,5 Q10,2.2 12.5,2.2 Q15,2.2 15,5 L14.3,4 Q12.5,3.2 10.7,4Z" fill="#6A2A10"/><path d="M3,9 H15 L13,13 H5Z" fill="#E8E8E8" stroke="#505050" stroke-width="1"/><path d="M6,9 V13 M9,9 V13 M12,9 V13" stroke="#505050" stroke-width="0.8"/><circle cx="6" cy="14.5" r="1" fill="#404040"/><circle cx="12" cy="14.5" r="1" fill="#404040"/></svg>
<svg style="left:425px;top:80px" width="16" height="16" viewBox="0 0 16 16"><rect x="0" y="1" width="5" height="5" fill="#E01010"/><path d="M0,1 l1.5,-1.5 h5 v5 l-1.5,1.5" fill="#E01010" opacity="0.7"/><path d="M4,5 L6,4 L10,8 L11,6 L12,13 L5,12 L7,11 L3,7Z" fill="#7CC830" stroke="#3A8A10" stroke-width="0.6"/><rect x="6" y="12" width="9" height="3.5" fill="#2020B0"/><path d="M6,12 l1.5,-1.5 h9 v3.5 l-1.5,1.5" fill="#2020B0" opacity="0.6"/><rect x="7.5" y="13.2" width="1" height="1" fill="#fff"/><rect x="9.5" y="13.2" width="1" height="1" fill="#fff"/><rect x="11.5" y="13.2" width="1" height="1" fill="#fff"/></svg>
<svg style="left:448px;top:80px" width="16" height="16" viewBox="0 0 16 16"><rect x="0" y="1" width="5" height="5" fill="#E01010"/><path d="M0,1 l1.5,-1.5 h5 v5 l-1.5,1.5" fill="#E01010" opacity="0.7"/><path d="M4,5 L6,4 L10,8 L11,6 L12,13 L5,12 L7,11 L3,7Z" fill="#7CC830" stroke="#3A8A10" stroke-width="0.6"/><rect x="6" y="12" width="9" height="3.5" fill="#2A60E0"/><path d="M6,12 l1.5,-1.5 h9 v3.5 l-1.5,1.5" fill="#2A60E0" opacity="0.6"/><rect x="7.5" y="13.2" width="1" height="1" fill="#fff"/><rect x="9.5" y="13.2" width="1" height="1" fill="#fff"/><rect x="11.5" y="13.2" width="1" height="1" fill="#fff"/></svg>
<svg style="left:471px;top:80px" width="16" height="16" viewBox="0 0 16 16"><ellipse cx="4" cy="14" rx="3.2" ry="1.7" fill="#F8E020" stroke="#7A4A00" stroke-width="0.8"/><path d="M1.5,14.3 H6.5" stroke="#FFF8A0" stroke-width="0.6"/><ellipse cx="4" cy="11" rx="3.2" ry="1.7" fill="#F8E020" stroke="#7A4A00" stroke-width="0.8"/><path d="M1.5,11.3 H6.5" stroke="#FFF8A0" stroke-width="0.6"/><ellipse cx="4" cy="8" rx="3.2" ry="1.7" fill="#F8E020" stroke="#7A4A00" stroke-width="0.8"/><path d="M1.5,8.3 H6.5" stroke="#FFF8A0" stroke-width="0.6"/><ellipse cx="12" cy="14" rx="3.2" ry="1.7" fill="#F8E020" stroke="#7A4A00" stroke-width="0.8"/><path d="M9.5,14.3 H14.5" stroke="#FFF8A0" stroke-width="0.6"/><ellipse cx="12" cy="11" rx="3.2" ry="1.7" fill="#F8E020" stroke="#7A4A00" stroke-width="0.8"/><path d="M9.5,11.3 H14.5" stroke="#FFF8A0" stroke-width="0.6"/><path d="M3,4 Q7,-1 11,3" fill="none" stroke="#204A90" stroke-width="1.2"/><path d="M9.5,3.5 L11.5,5.5 L12.5,2.5Z" fill="#204A90"/></svg>
<svg style="left:494px;top:80px" width="16" height="16" viewBox="0 0 16 16"><path d="M0.5,0.5 H8.5 L11.5,3.5 V13.5 H0.5Z" fill="#F8F8F8" stroke="#A0A0A0"/><path d="M8.5,0.5 V3.5 H11.5" fill="#D8E4F0" stroke="#A0A0A0"/><rect x="6" y="8" width="10" height="7" fill="#30A040"/><rect x="7.5" y="9.5" width="7" height="4.5" fill="#C8F0C0"/><ellipse cx="12" cy="14" rx="3.2" ry="1.7" fill="#F8E020" stroke="#7A4A00" stroke-width="0.8"/><path d="M9.5,14.3 H14.5" stroke="#FFF8A0" stroke-width="0.6"/><ellipse cx="12" cy="11" rx="3.2" ry="1.7" fill="#F8E020" stroke="#7A4A00" stroke-width="0.8"/><path d="M9.5,11.3 H14.5" stroke="#FFF8A0" stroke-width="0.6"/></svg>
<svg style="left:516px;top:80px" width="16" height="16" viewBox="0 0 16 16"><rect x="1" y="1" width="9" height="3.5" fill="#3030C0"/><path d="M1,1 l1.5,-1.5 h9 v3.5 l-1.5,1.5" fill="#3030C0" opacity="0.6"/><rect x="2.5" y="2.2" width="1" height="1" fill="#fff"/><rect x="4.5" y="2.2" width="1" height="1" fill="#fff"/><rect x="6.5" y="2.2" width="1" height="1" fill="#fff"/><path d="M5,5 L7,4 L11,8 L12,6 L13,13 L6,12 L8,11 L4,7Z" fill="#7CC830" stroke="#3A8A10" stroke-width="0.6"/><rect x="7" y="12" width="9" height="3.5" fill="#F07A30"/><path d="M7,12 l1.5,-1.5 h9 v3.5 l-1.5,1.5" fill="#F07A30" opacity="0.6"/><rect x="8.5" y="13.2" width="1" height="1" fill="#fff"/><rect x="10.5" y="13.2" width="1" height="1" fill="#fff"/><rect x="12.5" y="13.2" width="1" height="1" fill="#fff"/></svg>
<svg style="left:539px;top:80px" width="16" height="16" viewBox="0 0 16 16"><path d="M0.5,0.5 H9.5 L12.5,3.5 V13.5 H0.5Z" fill="#FFFFFF" stroke="#3A7AD0"/><path d="M9.5,0.5 V3.5 H12.5" fill="#D8E4F0" stroke="#3A7AD0"/><path d="M2,5.0 H10" stroke="#5AB0F0" stroke-width="1"/><path d="M2,7.5 H10" stroke="#5AB0F0" stroke-width="1"/><path d="M2,10.0 H10" stroke="#5AB0F0" stroke-width="1"/><ellipse cx="12" cy="16" rx="3.2" ry="1.7" fill="#F8E020" stroke="#7A4A00" stroke-width="0.8"/><path d="M9.5,16.3 H14.5" stroke="#FFF8A0" stroke-width="0.6"/><ellipse cx="12" cy="13" rx="3.2" ry="1.7" fill="#F8E020" stroke="#7A4A00" stroke-width="0.8"/><path d="M9.5,13.3 H14.5" stroke="#FFF8A0" stroke-width="0.6"/><ellipse cx="12" cy="10" rx="3.2" ry="1.7" fill="#F8E020" stroke="#7A4A00" stroke-width="0.8"/><path d="M9.5,10.3 H14.5" stroke="#FFF8A0" stroke-width="0.6"/><path d="M8,4 Q13,4 12,9" fill="none" stroke="#1A3A70" stroke-width="1"/></svg>
<svg style="left:563px;top:80px" width="16" height="16" viewBox="0 0 16 16"><path d="M3.5,0.5 H12.5 L15.5,3.5 V13.5 H3.5Z" fill="#FFFFFF" stroke="#3A7AD0"/><path d="M12.5,0.5 V3.5 H15.5" fill="#D8E4F0" stroke="#3A7AD0"/><path d="M5,5.0 H13" stroke="#5AB0F0" stroke-width="1"/><path d="M5,7.5 H13" stroke="#5AB0F0" stroke-width="1"/><path d="M5,10.0 H13" stroke="#5AB0F0" stroke-width="1"/><ellipse cx="3" cy="8" rx="3.2" ry="1.7" fill="#F8E020" stroke="#7A4A00" stroke-width="0.8"/><path d="M0.5,8.3 H5.5" stroke="#FFF8A0" stroke-width="0.6"/><ellipse cx="3" cy="5" rx="3.2" ry="1.7" fill="#F8E020" stroke="#7A4A00" stroke-width="0.8"/><path d="M0.5,5.3 H5.5" stroke="#FFF8A0" stroke-width="0.6"/><ellipse cx="3" cy="2" rx="3.2" ry="1.7" fill="#F8E020" stroke="#7A4A00" stroke-width="0.8"/><path d="M0.5,2.3 H5.5" stroke="#FFF8A0" stroke-width="0.6"/><path d="M8,12 Q2,12 2,8" fill="none" stroke="#1A3A70" stroke-width="1"/></svg>
<svg style="left:586px;top:80px" width="16" height="16" viewBox="0 0 16 16"><rect x="6" y="5" width="10" height="11" fill="#C8C8C8"/><ellipse cx="11" cy="15" rx="3.2" ry="1.7" fill="#F8E020" stroke="#7A4A00" stroke-width="0.8"/><path d="M8.5,15.3 H13.5" stroke="#FFF8A0" stroke-width="0.6"/><ellipse cx="11" cy="12" rx="3.2" ry="1.7" fill="#F8E020" stroke="#7A4A00" stroke-width="0.8"/><path d="M8.5,12.3 H13.5" stroke="#FFF8A0" stroke-width="0.6"/><ellipse cx="11" cy="9" rx="3.2" ry="1.7" fill="#F8E020" stroke="#7A4A00" stroke-width="0.8"/><path d="M8.5,9.3 H13.5" stroke="#FFF8A0" stroke-width="0.6"/><path d="M4,0 V8 M0,4 H8" stroke="#20B020" stroke-width="2.6"/></svg>
<svg style="left:609px;top:80px" width="16" height="16" viewBox="0 0 16 16"><rect x="6" y="5" width="10" height="11" fill="#C8C8C8"/><ellipse cx="11" cy="15" rx="3.2" ry="1.7" fill="#F8E020" stroke="#7A4A00" stroke-width="0.8"/><path d="M8.5,15.3 H13.5" stroke="#FFF8A0" stroke-width="0.6"/><ellipse cx="11" cy="12" rx="3.2" ry="1.7" fill="#F8E020" stroke="#7A4A00" stroke-width="0.8"/><path d="M8.5,12.3 H13.5" stroke="#FFF8A0" stroke-width="0.6"/><ellipse cx="11" cy="9" rx="3.2" ry="1.7" fill="#F8E020" stroke="#7A4A00" stroke-width="0.8"/><path d="M8.5,9.3 H13.5" stroke="#FFF8A0" stroke-width="0.6"/><path d="M0,4 H8" stroke="#20B020" stroke-width="2.6"/></svg>
<svg style="left:632px;top:80px" width="16" height="16" viewBox="0 0 16 16"><path d="M1.5,0.5 H9.5 L12.5,3.5 V12.5 H1.5Z" fill="#FFFFFF" stroke="#3A7AD0"/><path d="M9.5,0.5 V3.5 H12.5" fill="#D8E4F0" stroke="#3A7AD0"/><path d="M3,5.0 H10" stroke="#5AB0F0" stroke-width="1"/><path d="M3,7.5 H10" stroke="#5AB0F0" stroke-width="1"/><path d="M3,10.0 H10" stroke="#5AB0F0" stroke-width="1"/><ellipse cx="3" cy="14" rx="3.2" ry="1.7" fill="#F8E020" stroke="#7A4A00" stroke-width="0.8"/><path d="M0.5,14.3 H5.5" stroke="#FFF8A0" stroke-width="0.6"/><ellipse cx="3" cy="11" rx="3.2" ry="1.7" fill="#F8E020" stroke="#7A4A00" stroke-width="0.8"/><path d="M0.5,11.3 H5.5" stroke="#FFF8A0" stroke-width="0.6"/><path d="M6,8 L9,11 L15,5" fill="none" stroke="#20B020" stroke-width="2.4"/></svg>
<svg style="left:655px;top:80px" width="16" height="16" viewBox="0 0 16 16"><path d="M1.5,0.5 H9.5 L12.5,3.5 V13.5 H1.5Z" fill="#FFFFFF" stroke="#3A7AD0"/><path d="M9.5,0.5 V3.5 H12.5" fill="#D8E4F0" stroke="#3A7AD0"/><path d="M3,5.0 H10" stroke="#5AB0F0" stroke-width="1"/><path d="M3,7.5 H10" stroke="#5AB0F0" stroke-width="1"/><path d="M3,10.0 H10" stroke="#5AB0F0" stroke-width="1"/><ellipse cx="6" cy="15" rx="3.2" ry="1.7" fill="#F8E020" stroke="#7A4A00" stroke-width="0.8"/><path d="M3.5,15.3 H8.5" stroke="#FFF8A0" stroke-width="0.6"/><ellipse cx="6" cy="12" rx="3.2" ry="1.7" fill="#F8E020" stroke="#7A4A00" stroke-width="0.8"/><path d="M3.5,12.3 H8.5" stroke="#FFF8A0" stroke-width="0.6"/><ellipse cx="6" cy="9" rx="3.2" ry="1.7" fill="#F8E020" stroke="#7A4A00" stroke-width="0.8"/><path d="M3.5,9.3 H8.5" stroke="#FFF8A0" stroke-width="0.6"/><ellipse cx="6" cy="6" rx="3.2" ry="1.7" fill="#F8E020" stroke="#7A4A00" stroke-width="0.8"/><path d="M3.5,6.3 H8.5" stroke="#FFF8A0" stroke-width="0.6"/><ellipse cx="12" cy="15" rx="3.2" ry="1.7" fill="#F8E020" stroke="#7A4A00" stroke-width="0.8"/><path d="M9.5,15.3 H14.5" stroke="#FFF8A0" stroke-width="0.6"/><ellipse cx="12" cy="12" rx="3.2" ry="1.7" fill="#F8E020" stroke="#7A4A00" stroke-width="0.8"/><path d="M9.5,12.3 H14.5" stroke="#FFF8A0" stroke-width="0.6"/></svg>
<svg style="left:678px;top:80px" width="16" height="16" viewBox="0 0 16 16"><path d="M0.5,0.5 H8.5 L11.5,3.5 V13.5 H0.5Z" fill="#FFFFFF" stroke="#3A7AD0"/><path d="M8.5,0.5 V3.5 H11.5" fill="#D8E4F0" stroke="#3A7AD0"/><path d="M2,5.0 H9" stroke="#5AB0F0" stroke-width="1"/><path d="M2,7.5 H9" stroke="#5AB0F0" stroke-width="1"/><path d="M2,10.0 H9" stroke="#5AB0F0" stroke-width="1"/><path d="M8,15 L15,7" stroke="#20A020" stroke-width="1.6"/><circle cx="9" cy="9" r="1.7" fill="#20A020"/><circle cx="14" cy="14" r="1.7" fill="#20A020"/></svg>
<svg style="left:701px;top:80px" width="16" height="16" viewBox="0 0 16 16"><path d="M0.5,0.5 H8.5 L11.5,3.5 V12.5 H0.5Z" fill="#FFFFFF" stroke="#3A7AD0"/><path d="M8.5,0.5 V3.5 H11.5" fill="#D8E4F0" stroke="#3A7AD0"/><path d="M2,5.0 H9" stroke="#5AB0F0" stroke-width="1"/><path d="M2,7.5 H9" stroke="#5AB0F0" stroke-width="1"/><path d="M2,10.0 H9" stroke="#5AB0F0" stroke-width="1"/><path d="M8,12 V9.5 Q8,7 11,7 H14 Q17,7 17,9.5 V12Z" fill="#E02020"/><path d="M11.2,7 L12.5,8.5 L13.8,7Z" fill="#fff"/><circle cx="12.5" cy="4.8" r="2.4" fill="#FCD8B8"/><path d="M10,5 Q10,2.2 12.5,2.2 Q15,2.2 15,5 L14.3,4 Q12.5,3.2 10.7,4Z" fill="#6A2A10"/><path d="M3,17 V14.5 Q3,12 6,12 H9 Q12,12 12,14.5 V17Z" fill="#2A5AD0"/><path d="M6.2,12 L7.5,13.5 L8.8,12Z" fill="#fff"/><circle cx="7.5" cy="9.8" r="2.4" fill="#FCD8B8"/><path d="M5,10 Q5,7.2 7.5,7.2 Q10,7.2 10,10 L9.3,9 Q7.5,8.2 5.7,9Z" fill="#6A2A10"/></svg>
<svg style="left:724px;top:80px" width="16" height="16" viewBox="0 0 16 16"><rect x="1.5" y="0.5" width="13" height="15" rx="2" fill="#2AA040" stroke="#1A7030"/><rect x="3" y="2" width="10" height="12" rx="1" fill="#40B850"/><path d="M5,4 V11 H10 M5,7 H10" fill="none" stroke="#C8F0D0" stroke-width="1"/><rect x="9" y="5.5" width="3" height="2.5" fill="#C8F0D0"/><rect x="9" y="9.5" width="3" height="2.5" fill="#C8F0D0"/></svg>
<svg style="left:748px;top:80px" width="16" height="16" viewBox="0 0 16 16"><path d="M1.5,4.5 H11.5 L14.5,7.5 V15.5 H1.5Z" fill="#F0F0F8" stroke="#A0A8C0"/><path d="M11.5,4.5 V7.5 H14.5" fill="#D8E4F0" stroke="#A0A8C0"/><path d="M3,9.0 H12" stroke="#B8C8E0" stroke-width="1"/><path d="M3,11.5 H12" stroke="#B8C8E0" stroke-width="1"/><path d="M3,14.0 H12" stroke="#B8C8E0" stroke-width="1"/><path d="M1,5 Q5,0 9,2 L14,1 V5 Q10,7 7,6Z" fill="#D8A888" stroke="#A87858" stroke-width="0.6"/></svg>
<svg style="left:769px;top:94px" width="7" height="4"><path d="M0,0 H7 L3.5,3.5Z" fill="#3A2E1E"/></svg>
<div class="a" style="left:780px;top:77px;width:1px;height:1px;background:#C8C0A8"></div>
<div class="a" style="left:780px;top:98px;width:1px;height:1px;background:#C8C0A8"></div>
<div class="a" style="left:786px;top:82px;width:3px;height:1px;background:#B8B088"></div><div class="a" style="left:786px;top:84px;width:3px;height:1px;background:#B8B088"></div><div class="a" style="left:786px;top:86px;width:3px;height:1px;background:#B8B088"></div><div class="a" style="left:786px;top:88px;width:3px;height:1px;background:#B8B088"></div><div class="a" style="left:786px;top:90px;width:3px;height:1px;background:#B8B088"></div><div class="a" style="left:786px;top:92px;width:3px;height:1px;background:#B8B088"></div>
<svg style="left:794px;top:80px" width="16" height="16" viewBox="0 0 16 16"><path d="M0.5,1.5 H9.5 L12.5,4.5 V13.5 H0.5Z" fill="#FFFFFF" stroke="#B8B8B8"/><path d="M9.5,1.5 V4.5 H12.5" fill="#E8E8F0" stroke="#B8B8B8"/><rect x="0" y="13.5" width="13" height="1.3" fill="#505050"/><path d="M8,6 H3 L6,9 L3,12 H8" fill="none" stroke="#202020" stroke-width="1.1"/><path d="M7,10 V7.5 Q7,5 10,5 H13 Q16,5 16,7.5 V10Z" fill="#3A6ED0"/><path d="M10.2,5 L11.5,6.5 L12.8,5Z" fill="#fff"/><circle cx="11.5" cy="2.8" r="2.4" fill="#FCD8B8"/><path d="M9,3 Q9,0.2 11.5,0.2 Q14,0.2 14,3 L13.3,2 Q11.5,1.2 9.7,2Z" fill="#6A2A10"/><rect x="9" y="10" width="5" height="5" fill="#E02020"/><path d="M9,10 l1.5,-1.5 h5 v5 l-1.5,1.5" fill="#E02020" opacity="0.7"/></svg>
<svg style="left:817px;top:80px" width="16" height="16" viewBox="0 0 16 16"><path d="M0.5,1.5 H9.5 L12.5,4.5 V13.5 H0.5Z" fill="#FFFFFF" stroke="#B8B8B8"/><path d="M9.5,1.5 V4.5 H12.5" fill="#E8E8F0" stroke="#B8B8B8"/><rect x="0" y="13.5" width="13" height="1.3" fill="#505050"/><path d="M8,6 H3 L6,9 L3,12 H8" fill="none" stroke="#202020" stroke-width="1.1"/><path d="M7,10 V7.5 Q7,5 10,5 H13 Q16,5 16,7.5 V10Z" fill="#E02020"/><path d="M10.2,5 L11.5,6.5 L12.8,5Z" fill="#fff"/><circle cx="11.5" cy="2.8" r="2.4" fill="#FCD8B8"/><path d="M9,3 Q9,0.2 11.5,0.2 Q14,0.2 14,3 L13.3,2 Q11.5,1.2 9.7,2Z" fill="#6A2A10"/><rect x="9" y="10" width="5" height="5" fill="#2040D0"/><path d="M9,10 l1.5,-1.5 h5 v5 l-1.5,1.5" fill="#2040D0" opacity="0.7"/></svg>
<svg style="left:840px;top:80px" width="16" height="16" viewBox="0 0 16 16"><path d="M0.5,1.5 H9.5 L12.5,4.5 V13.5 H0.5Z" fill="#FFFFFF" stroke="#B8B8B8"/><path d="M9.5,1.5 V4.5 H12.5" fill="#E8E8F0" stroke="#B8B8B8"/><rect x="0" y="13.5" width="13" height="1.3" fill="#505050"/><path d="M8,6 H3 L6,9 L3,12 H8" fill="none" stroke="#202020" stroke-width="1.1"/><path d="M3,16 V13.5 Q3,11 6,11 H9 Q12,11 12,13.5 V16Z" fill="#E02020"/><path d="M6.2,11 L7.5,12.5 L8.8,11Z" fill="#fff"/><circle cx="7.5" cy="8.8" r="2.4" fill="#FCD8B8"/><path d="M5,9 Q5,6.2 7.5,6.2 Q10,6.2 10,9 L9.3,8 Q7.5,7.2 5.7,8Z" fill="#6A2A10"/><path d="M9,13 V10.5 Q9,8 12,8 H15 Q18,8 18,10.5 V13Z" fill="#3A6ED0"/><path d="M12.2,8 L13.5,9.5 L14.8,8Z" fill="#fff"/><circle cx="13.5" cy="5.8" r="2.4" fill="#FCD8B8"/><path d="M11,6 Q11,3.2 13.5,3.2 Q16,3.2 16,6 L15.3,5 Q13.5,4.2 11.7,5Z" fill="#6A2A10"/></svg>
<svg style="left:863px;top:80px" width="16" height="16" viewBox="0 0 16 16"><path d="M0.5,1.5 H9.5 L12.5,4.5 V13.5 H0.5Z" fill="#FFFFFF" stroke="#B8B8B8"/><path d="M9.5,1.5 V4.5 H12.5" fill="#E8E8F0" stroke="#B8B8B8"/><rect x="0" y="13.5" width="13" height="1.3" fill="#505050"/><path d="M8,6 H3 L6,9 L3,12 H8" fill="none" stroke="#202020" stroke-width="1.1"/><rect x="10" y="1" width="1" height="12" fill="#606060"/><rect x="11" y="1" width="5" height="5" fill="#E01010"/><rect x="6" y="12" width="9" height="3.5" fill="#2020B0"/><path d="M6,12 l1.5,-1.5 h9 v3.5 l-1.5,1.5" fill="#2020B0" opacity="0.6"/><rect x="7.5" y="13.2" width="1" height="1" fill="#fff"/><rect x="9.5" y="13.2" width="1" height="1" fill="#fff"/><rect x="11.5" y="13.2" width="1" height="1" fill="#fff"/></svg>
<svg style="left:886px;top:80px" width="16" height="16" viewBox="0 0 16 16"><path d="M0.5,1.5 H9.5 L12.5,4.5 V13.5 H0.5Z" fill="#FFFFFF" stroke="#B8B8B8"/><path d="M9.5,1.5 V4.5 H12.5" fill="#E8E8F0" stroke="#B8B8B8"/><rect x="0" y="13.5" width="13" height="1.3" fill="#505050"/><path d="M8,6 H3 L6,9 L3,12 H8" fill="none" stroke="#202020" stroke-width="1.1"/><rect x="10" y="1" width="1" height="11" fill="#606060"/><rect x="11" y="0" width="5" height="5" fill="#E01010"/><rect x="7" y="11" width="6" height="4" fill="#F0A020" stroke="#804010" stroke-width="0.6"/></svg>
<svg style="left:909px;top:80px" width="16" height="16" viewBox="0 0 16 16"><path d="M0.5,1.5 H9.5 L12.5,4.5 V13.5 H0.5Z" fill="#FFFFFF" stroke="#B8B8B8"/><path d="M9.5,1.5 V4.5 H12.5" fill="#E8E8F0" stroke="#B8B8B8"/><rect x="0" y="13.5" width="13" height="1.3" fill="#505050"/><path d="M8,6 H3 L6,9 L3,12 H8" fill="none" stroke="#202020" stroke-width="1.1"/><rect x="10" y="2" width="5" height="5" fill="#E01010"/><path d="M10,2 l1.5,-1.5 h5 v5 l-1.5,1.5" fill="#E01010" opacity="0.7"/><rect x="6" y="12" width="9" height="3.5" fill="#2A60E0"/><path d="M6,12 l1.5,-1.5 h9 v3.5 l-1.5,1.5" fill="#2A60E0" opacity="0.6"/><rect x="7.5" y="13.2" width="1" height="1" fill="#fff"/><rect x="9.5" y="13.2" width="1" height="1" fill="#fff"/><rect x="11.5" y="13.2" width="1" height="1" fill="#fff"/></svg>
<svg style="left:932px;top:80px" width="16" height="16" viewBox="0 0 16 16"><path d="M0.5,1.5 H9.5 L12.5,4.5 V13.5 H0.5Z" fill="#FFFFFF" stroke="#B8B8B8"/><path d="M9.5,1.5 V4.5 H12.5" fill="#E8E8F0" stroke="#B8B8B8"/><rect x="0" y="13.5" width="13" height="1.3" fill="#505050"/><path d="M8,6 H3 L6,9 L3,12 H8" fill="none" stroke="#202020" stroke-width="1.1"/><rect x="7.5" y="5.5" width="7" height="10" fill="#E0E0E0" stroke="#606060"/><path d="M9,8 H13 M9,10 H13 M9,12 H13" stroke="#606060"/></svg>
<svg style="left:955px;top:80px" width="16" height="16" viewBox="0 0 16 16"><path d="M0.5,1.5 H9.5 L12.5,4.5 V13.5 H0.5Z" fill="#FFFFFF" stroke="#B8B8B8"/><path d="M9.5,1.5 V4.5 H12.5" fill="#E8E8F0" stroke="#B8B8B8"/><rect x="0" y="13.5" width="13" height="1.3" fill="#505050"/><path d="M8,6 H3 L6,9 L3,12 H8" fill="none" stroke="#202020" stroke-width="1.1"/><path d="M6,9 L9,12 L15,6" fill="none" stroke="#20B020" stroke-width="2.4"/></svg>
<svg style="left:978px;top:94px" width="7" height="4"><path d="M0,0 H7 L3.5,3.5Z" fill="#3A2E1E"/></svg>
<div class="a" style="left:988px;top:77px;width:1px;height:1px;background:#C8C0A8"></div>
<div class="a" style="left:988px;top:98px;width:1px;height:1px;background:#C8C0A8"></div>
<div class="a" style="left:58px;top:123px;width:1px;height:22px;background:linear-gradient(#ECE6DA,#B8AE8C 30%,#B8AE8C 70%,#ECE6DA)"></div><div class="a" style="left:59px;top:123px;width:1px;height:22px;background:linear-gradient(#ECE6DA,#FFFFFF 30%,#FFFFFF 70%,#ECE6DA)"></div>
<svg style="left:65px;top:126px" width="16" height="16" viewBox="0 0 16 16"><defs><radialGradient id="gp" cx="0.4" cy="0.3" r="0.7"><stop offset="0" stop-color="#C8EAB0"/><stop offset="1" stop-color="#5AA83A"/></radialGradient></defs><circle cx="8" cy="8" r="7.5" fill="url(#gp)" stroke="#6A8A5A"/><path d="M8,3.5 V12.5 M3.5,8 H12.5" stroke="#fff" stroke-width="2.6"/></svg>
<svg style="left:89px;top:126px" width="16" height="16" viewBox="0 0 16 16"><path d="M1.5,0.5 H8.5 L11.5,3.5 V13.5 H1.5Z" fill="#FFFFFF" stroke="#6A8AB0"/><path d="M8.5,0.5 V3.5 H11.5" fill="#D8E4F0" stroke="#6A8AB0"/><path d="M3,5.0 H9" stroke="#A0B0C8" stroke-width="1"/><path d="M3,7.5 H9" stroke="#A0B0C8" stroke-width="1"/><path d="M3,10.0 H9" stroke="#A0B0C8" stroke-width="1"/><circle cx="11" cy="11.5" r="4.5" fill="#6CBA48" stroke="#4A8A30" stroke-width="0.8"/><path d="M11,9 V14 M8.5,11.5 H13.5" stroke="#fff" stroke-width="1.8"/></svg>
<svg style="left:112px;top:126px" width="16" height="16" viewBox="0 0 16 16"><path d="M2,14 L3,10 L11,2 L14,5 L6,13Z" fill="#3AA020" stroke="#1A6A10" stroke-width="0.8"/><path d="M4.5,9.5 L11.5,2.5" stroke="#90E070" stroke-width="1"/><path d="M2,14 L3,10 L6,13Z" fill="#F0F0E0"/></svg>
<svg style="left:134px;top:126px" width="16" height="16" viewBox="0 0 16 16"><path d="M3,3.5 L13,13.5 M13,3.5 L3,13.5" stroke="#E05048" stroke-width="2.4"/><path d="M3.5,4 L12.5,13 M12.5,4 L3.5,13" stroke="#F8A098" stroke-width="0.7"/></svg>
<svg style="left:157px;top:126px" width="16" height="16" viewBox="0 0 16 16"><rect x="0.5" y="0.5" width="15" height="15" rx="1" fill="#BCC8D2" stroke="#9AAAB8"/><rect x="3" y="1" width="10" height="5" fill="#D6DEE6"/><rect x="3" y="9" width="10" height="6" fill="#A8B6C2"/><text x="9.5" y="15" font-size="6.5" fill="#8A9AA8" font-family="Liberation Sans" font-weight="bold">ok</text></svg>
<div class="a" style="left:178px;top:123px;width:1px;height:22px;background:linear-gradient(#ECE6DA,#B8AE8C 30%,#B8AE8C 70%,#ECE6DA)"></div><div class="a" style="left:179px;top:123px;width:1px;height:22px;background:linear-gradient(#ECE6DA,#FFFFFF 30%,#FFFFFF 70%,#ECE6DA)"></div>
<svg style="left:185px;top:126px" width="16" height="16" viewBox="0 0 16 16"><rect x="1.5" y="3.5" width="12" height="11" fill="#F4F8FC" stroke="#2A5A9A" stroke-width="1.2"/><path d="M3,7 H12 M3,9.5 H12 M3,12 H12" stroke="#9AB0C8" stroke-width="0.8"/><g opacity="1.0"><defs><linearGradient id="fg" x1="0" y1="0" x2="1" y2="0"><stop offset="0" stop-color="#6A6A6A"/><stop offset="0.5" stop-color="#F4F4F4"/><stop offset="1" stop-color="#7A7A7A"/></linearGradient></defs><path d="M0.5,1 H13.5 V2.5 L9,8 V14 Q7,15 5,14 V8 L0.5,2.5Z" fill="url(#fg)" stroke="#5A5A5A" stroke-width="0.8"/></g><path d="M12,8 V15 M10,13 L12,15.5 L14,13" stroke="#1A2A4A" stroke-width="1.3" fill="none"/></svg>
<svg style="left:208px;top:126px" width="16" height="16" viewBox="0 0 16 16"><g opacity="1.0"><defs><linearGradient id="fg" x1="0" y1="0" x2="1" y2="0"><stop offset="0" stop-color="#6A6A6A"/><stop offset="0.5" stop-color="#F4F4F4"/><stop offset="1" stop-color="#7A7A7A"/></linearGradient></defs><path d="M0.5,1 H13.5 V2.5 L9,8 V14 Q7,15 5,14 V8 L0.5,2.5Z" fill="url(#fg)" stroke="#5A5A5A" stroke-width="0.8"/></g><rect x="8.5" y="5.5" width="6" height="10" fill="#F4F8FC" stroke="#2A5A9A" stroke-width="1.2"/><path d="M10,9 H13 M10,11.5 H13 M10,14 H13" stroke="#9AB0C8" stroke-width="0.8"/><path d="M9,12 L10.5,13.5 L13.5,10" stroke="#2A6AD0" stroke-width="1.3" fill="none"/></svg>
<svg style="left:231px;top:126px" width="16" height="16" viewBox="0 0 16 16"><rect x="0.5" y="5.5" width="6" height="10" fill="#F4F8FC" stroke="#2A5A9A" stroke-width="1.2"/><path d="M2,9 H5 M2,11.5 H5 M2,14 H5" stroke="#9AB0C8" stroke-width="0.8"/><g opacity="1.0"><defs><linearGradient id="fg" x1="0" y1="0" x2="1" y2="0"><stop offset="0" stop-color="#6A6A6A"/><stop offset="0.5" stop-color="#F4F4F4"/><stop offset="1" stop-color="#7A7A7A"/></linearGradient></defs><path d="M0.5,1 H13.5 V2.5 L9,8 V14 Q7,15 5,14 V8 L0.5,2.5Z" fill="url(#fg)" stroke="#5A5A5A" stroke-width="0.8"/></g><rect x="8.5" y="5.5" width="7" height="10" fill="#F4F8FC" stroke="#2A5A9A" stroke-width="1.2"/><path d="M10,9 H14 M10,11.5 H14 M10,14 H14" stroke="#9AB0C8" stroke-width="0.8"/></svg>
<svg style="left:248px;top:133px" width="7" height="4"><path d="M0,0 H7 L3.5,3.5Z" fill="#3A2E1E"/></svg>
<svg style="left:261px;top:126px" width="16" height="16" viewBox="0 0 16 16"><g opacity="0.55"><defs><linearGradient id="fg" x1="0" y1="0" x2="1" y2="0"><stop offset="0" stop-color="#6A6A6A"/><stop offset="0.5" stop-color="#F4F4F4"/><stop offset="1" stop-color="#7A7A7A"/></linearGradient></defs><path d="M0.5,1 H13.5 V2.5 L9,8 V14 Q7,15 5,14 V8 L0.5,2.5Z" fill="url(#fg)" stroke="#5A5A5A" stroke-width="0.8"/></g><path d="M8.5,9 L14.5,15 M14.5,9 L8.5,15" stroke="#B89898" stroke-width="1.8"/></svg>
<div class="a" style="left:282px;top:123px;width:1px;height:22px;background:linear-gradient(#ECE6DA,#B8AE8C 30%,#B8AE8C 70%,#ECE6DA)"></div><div class="a" style="left:283px;top:123px;width:1px;height:22px;background:linear-gradient(#ECE6DA,#FFFFFF 30%,#FFFFFF 70%,#ECE6DA)"></div>
<svg style="left:289px;top:126px" width="16" height="16" viewBox="0 0 16 16"><path d="M3.5,8 A5,4.5 0 0 1 12.5,6" fill="none" stroke="#2A9A2A" stroke-width="1.6"/><path d="M10,6.5 L15,6 L12.5,10Z" fill="#2A9A2A"/><path d="M12.5,10 A5,4.5 0 0 1 3.5,12" fill="none" stroke="#2A9A2A" stroke-width="1.6"/><path d="M6,11.5 L1,12 L3.5,8Z" fill="#2A9A2A"/></svg>
<div class="a" style="left:310px;top:123px;width:1px;height:22px;background:linear-gradient(#ECE6DA,#B8AE8C 30%,#B8AE8C 70%,#ECE6DA)"></div><div class="a" style="left:311px;top:123px;width:1px;height:22px;background:linear-gradient(#ECE6DA,#FFFFFF 30%,#FFFFFF 70%,#ECE6DA)"></div>
<svg style="left:317px;top:126px" width="16" height="16" viewBox="0 0 16 16"><defs><radialGradient id="hp" cx="0.45" cy="0.3" r="0.75"><stop offset="0" stop-color="#FCE2B0"/><stop offset="1" stop-color="#E89A40"/></radialGradient></defs><circle cx="8" cy="8" r="7.3" fill="url(#hp)" stroke="#8A7A6A" stroke-width="0.8"/><text x="8" y="12.5" font-size="11" text-anchor="middle" fill="#8A4A10" font-family="Liberation Sans" font-weight="bold">?</text></svg>
<div class="a" style="left:0;top:101px;width:1657px;height:1px;background:#A8A29A"></div>
<div class="a" style="left:0;top:102px;width:1657px;height:1px;background:#6B6B6B"></div>
<div class="a" style="left:0;top:103px;width:1657px;height:1px;background:#F2F2F2"></div>
<div class="a" style="left:0;top:104px;width:1657px;height:17px;background:#B4B4B4"></div>
<div class="a" style="left:0;top:121px;width:1657px;height:1px;background:#6B6B6B"></div>
<svg style="left:0;top:104px" width="6" height="15"><rect x="-4" y="0.5" width="9" height="13" fill="#fff" stroke="#7A8A9A"/><rect x="-3" y="1" width="7" height="3" fill="#6CBF3C"/><path d="M-3,6.5 H4 M-3,9.5 H4" stroke="#7A8A9A"/></svg>
<div class="t" style="left:11px;top:104px;height:17px;line-height:17px;font-size:12px;font-weight:bold;color:#6A6A6A">Места хранения номенклатуры</div>
<div class="a" style="left:1612px;top:115px;width:8px;height:2px;background:#5F5F5F"></div>
<svg style="left:1629px;top:105px" width="14" height="14"><rect x="4.5" y="1.5" width="7" height="6" fill="none" stroke="#5F5F5F"/><rect x="4" y="1" width="8" height="1.5" fill="#5F5F5F"/><rect x="1" y="4.5" width="7" height="7" fill="#B4B4B4" stroke="#5F5F5F"/><rect x="0.5" y="4" width="8" height="1.5" fill="#5F5F5F"/></svg>
<svg style="left:1650px;top:106px" width="10" height="12"><path d="M1.5,1 L6.5,5.5 L1.5,10" fill="none" stroke="#5F5F5F" stroke-width="2"/></svg>
<div class="t" style="left:-6px;top:126px;height:19px;line-height:19px;color:#1E1E1E">Действия</div>
<svg style="left:47px;top:132px" width="7" height="4"><path d="M0,0 H6 L3,3.5Z" fill="#3A2E1E"/></svg>
<div class="a" style="left:0;top:145px;width:1657px;height:1px;background:#B6AE8A"></div>
<div class="a" style="left:0;top:146px;width:1657px;height:9px;background:#FEFAEF"></div>
<div class="a" style="left:0;top:155px;width:1657px;height:1px;background:#B6AE8A"></div>
<div class="a" style="left:0;top:156px;width:1641px;height:20px;background:#F4F1DE"></div>
<div class="a" style="left:31px;top:156px;width:182px;height:20px;background:#D5D1BD"></div>
<div class="a" style="left:214px;top:156px;width:138px;height:1px;background:#FBF9EC"></div>
<div class="a" style="left:214px;top:156px;width:1px;height:20px;background:#FBF9EC"></div>
<div class="a" style="left:353px;top:156px;width:59px;height:1px;background:#FBF9EC"></div>
<div class="a" style="left:353px;top:156px;width:1px;height:20px;background:#FBF9EC"></div>
<div class="a" style="left:413px;top:156px;width:138px;height:1px;background:#FBF9EC"></div>
<div class="a" style="left:413px;top:156px;width:1px;height:20px;background:#FBF9EC"></div>
<div class="a" style="left:552px;top:156px;width:114px;height:1px;background:#FBF9EC"></div>
<div class="a" style="left:552px;top:156px;width:1px;height:20px;background:#FBF9EC"></div>
<div class="a" style="left:667px;top:156px;width:114px;height:1px;background:#FBF9EC"></div>
<div class="a" style="left:667px;top:156px;width:1px;height:20px;background:#FBF9EC"></div>
<div class="a" style="left:782px;top:156px;width:114px;height:1px;background:#FBF9EC"></div>
<div class="a" style="left:782px;top:156px;width:1px;height:20px;background:#FBF9EC"></div>
<div class="a" style="left:897px;top:156px;width:114px;height:1px;background:#FBF9EC"></div>
<div class="a" style="left:897px;top:156px;width:1px;height:20px;background:#FBF9EC"></div>
<div class="a" style="left:1012px;top:156px;width:114px;height:1px;background:#FBF9EC"></div>
<div class="a" style="left:1012px;top:156px;width:1px;height:20px;background:#FBF9EC"></div>
<div class="a" style="left:1127px;top:156px;width:114px;height:1px;background:#FBF9EC"></div>
<div class="a" style="left:1127px;top:156px;width:1px;height:20px;background:#FBF9EC"></div>
<div class="a" style="left:1242px;top:156px;width:175px;height:1px;background:#FBF9EC"></div>
<div class="a" style="left:1242px;top:156px;width:1px;height:20px;background:#FBF9EC"></div>
<div class="a" style="left:1418px;top:156px;width:110px;height:1px;background:#FBF9EC"></div>
<div class="a" style="left:1418px;top:156px;width:1px;height:20px;background:#FBF9EC"></div>
<div class="a" style="left:1529px;top:156px;width:112px;height:1px;background:#FBF9EC"></div>
<div class="a" style="left:1529px;top:156px;width:1px;height:20px;background:#FBF9EC"></div>
<div class="a" style="left:0;top:156px;width:30px;height:1px;background:#FBF9EC"></div>
<div class="t" style="left:35px;top:156px;width:176px;height:20px;line-height:20px;color:#2A2A2A">Номенклатура</div>
<div class="t" style="left:218px;top:156px;width:132px;height:20px;line-height:20px;color:#2A2A2A">Склад</div>
<div class="t" style="left:357px;top:156px;width:53px;height:20px;line-height:20px;color:#2A2A2A">Приорит<span class="el"></span></div>
<div class="t" style="left:417px;top:156px;width:132px;height:20px;line-height:20px;color:#2A2A2A">Место хранения</div>
<div class="t" style="left:556px;top:156px;width:108px;height:20px;line-height:20px;color:#2A2A2A">Остаток на складе</div>
<div class="t" style="left:671px;top:156px;width:108px;height:20px;line-height:20px;color:#2A2A2A">В резерве</div>
<div class="t" style="left:786px;top:156px;width:108px;height:20px;line-height:20px;color:#2A2A2A">Штрих код</div>
<div class="t" style="left:901px;top:156px;width:108px;height:20px;line-height:20px;color:#2A2A2A">Вес брутто</div>
<div class="t" style="left:1016px;top:156px;width:108px;height:20px;line-height:20px;color:#2A2A2A">Количество штук в <span class="el"></span></div>
<div class="t" style="left:1131px;top:156px;width:108px;height:20px;line-height:20px;color:#2A2A2A">Остаток в ячейкке</div>
<div class="t" style="left:1246px;top:156px;width:169px;height:20px;line-height:20px;color:#2A2A2A">Количество товара в ячейке</div>
<div class="t" style="left:1422px;top:156px;width:104px;height:20px;line-height:20px;color:#2A2A2A">Минимальное кол<span class="el"></span></div>
<div class="t" style="left:1533px;top:156px;width:106px;height:20px;line-height:20px;color:#2A2A2A">Максимальное кол<span class="el"></span></div>
<div class="a" style="left:0;top:176px;width:1641px;height:1px;background:#B6AE8A"></div>
<div class="a" style="left:0;top:177px;width:1641px;height:18px;background:#FFFFFF"></div>
<svg style="left:3px;top:181px" width="16" height="9"><rect x="0.5" y="0.5" width="15" height="8" rx="1.5" fill="#C5DCF2" stroke="#6688AA"/><path d="M2.5,5.5 Q4,2 5.5,4.5 T9,4.5 L12.5,3.5" fill="none" stroke="#1A4C8A" stroke-width="1.1"/></svg>
<div class="t" style="left:35px;top:177px;width:178px;height:18px;line-height:21px;color:#000;">Шампунь мгновенное выпрямле<span class="el"></span></div>
<div class="t" style="left:218px;top:177px;width:133px;height:18px;line-height:21px;color:#000">Склад КЛИМОВСК</div>
<div class="t" style="left:353px;top:177px;width:54px;height:18px;line-height:21px;color:#000;text-align:right">1</div>
<div class="t" style="left:417px;top:177px;width:133px;height:18px;line-height:21px;color:#000">1-13-25-3</div>
<div class="t" style="left:786px;top:177px;width:109px;height:18px;line-height:21px;color:#000">7898584621833</div>
<div class="t" style="left:901px;top:177px;width:109px;height:18px;line-height:21px;color:#000">0</div>
<div class="t" style="left:1016px;top:177px;width:109px;height:18px;line-height:21px;color:#000">0</div>
<div class="t" style="left:1131px;top:177px;width:109px;height:18px;line-height:21px;color:#000">0</div>
<div class="a" style="left:0;top:195px;width:1641px;height:1px;background:#B6AE8A"></div>
<div class="a" style="left:0;top:196px;width:1641px;height:18px;background:#F0FFFF"></div>
<svg style="left:3px;top:200px" width="16" height="9"><rect x="0.5" y="0.5" width="15" height="8" rx="1.5" fill="#C5DCF2" stroke="#6688AA"/><path d="M2.5,5.5 Q4,2 5.5,4.5 T9,4.5 L12.5,3.5" fill="none" stroke="#1A4C8A" stroke-width="1.1"/></svg>
<div class="t" style="left:35px;top:196px;width:178px;height:18px;line-height:21px;color:#22227C;">Миска для состава серая CONT<span class="el"></span></div>
<div class="t" style="left:218px;top:196px;width:133px;height:18px;line-height:21px;color:#22227C">Склад КЛИМОВСК</div>
<div class="t" style="left:353px;top:196px;width:54px;height:18px;line-height:21px;color:#22227C;text-align:right">0</div>
<div class="t" style="left:417px;top:196px;width:133px;height:18px;line-height:21px;color:#22227C">1-06-08-1</div>
<div class="t" style="left:786px;top:196px;width:109px;height:18px;line-height:21px;color:#22227C">2000436214505</div>
<div class="t" style="left:901px;top:196px;width:109px;height:18px;line-height:21px;color:#22227C">0</div>
<div class="t" style="left:1016px;top:196px;width:109px;height:18px;line-height:21px;color:#22227C">0</div>
<div class="t" style="left:1131px;top:196px;width:109px;height:18px;line-height:21px;color:#22227C">0</div>
<div class="a" style="left:0;top:214px;width:1641px;height:1px;background:#B6AE8A"></div>
<div class="a" style="left:0;top:215px;width:1641px;height:18px;background:#F0FFFF"></div>
<svg style="left:3px;top:219px" width="16" height="9"><rect x="0.5" y="0.5" width="15" height="8" rx="1.5" fill="#C5DCF2" stroke="#6688AA"/><path d="M2.5,5.5 Q4,2 5.5,4.5 T9,4.5 L12.5,3.5" fill="none" stroke="#1A4C8A" stroke-width="1.1"/></svg>
<div class="t" style="left:35px;top:215px;width:178px;height:18px;line-height:21px;color:#22227C;letter-spacing:-0.030px;">"H-BRUSH Botox Capilar" - шаг 2 <span class="el"></span></div>
<div class="t" style="left:218px;top:215px;width:133px;height:18px;line-height:21px;color:#22227C">Склад КЛИМОВСК</div>
<div class="t" style="left:353px;top:215px;width:54px;height:18px;line-height:21px;color:#22227C;text-align:right">0</div>
<div class="t" style="left:417px;top:215px;width:133px;height:18px;line-height:21px;color:#22227C">202-07-2</div>
<div class="t" style="left:786px;top:215px;width:109px;height:18px;line-height:21px;color:#22227C">4603735130248</div>
<div class="t" style="left:901px;top:215px;width:109px;height:18px;line-height:21px;color:#22227C">0</div>
<div class="t" style="left:1016px;top:215px;width:109px;height:18px;line-height:21px;color:#22227C">0</div>
<div class="t" style="left:1131px;top:215px;width:109px;height:18px;line-height:21px;color:#22227C">0</div>
<div class="a" style="left:0;top:233px;width:1641px;height:1px;background:#B6AE8A"></div>
<div class="a" style="left:0;top:234px;width:1641px;height:18px;background:#FFFFFF"></div>
<svg style="left:3px;top:238px" width="16" height="9"><rect x="0.5" y="0.5" width="15" height="8" rx="1.5" fill="#C5DCF2" stroke="#6688AA"/><path d="M2.5,5.5 Q4,2 5.5,4.5 T9,4.5 L12.5,3.5" fill="none" stroke="#1A4C8A" stroke-width="1.1"/></svg>
<div class="t" style="left:35px;top:234px;width:178px;height:18px;line-height:21px;color:#000;letter-spacing:-0.030px;">"H-BRUSH Botox Capilar" - шаг 2 <span class="el"></span></div>
<div class="t" style="left:218px;top:234px;width:133px;height:18px;line-height:21px;color:#000">Склад КЛИМОВСК</div>
<div class="t" style="left:353px;top:234px;width:54px;height:18px;line-height:21px;color:#000;text-align:right">1</div>
<div class="t" style="left:417px;top:234px;width:133px;height:18px;line-height:21px;color:#000">201-08-3</div>
<div class="t" style="left:786px;top:234px;width:109px;height:18px;line-height:21px;color:#000">4603735130248</div>
<div class="t" style="left:901px;top:234px;width:109px;height:18px;line-height:21px;color:#000">0</div>
<div class="t" style="left:1016px;top:234px;width:109px;height:18px;line-height:21px;color:#000">0</div>
<div class="t" style="left:1131px;top:234px;width:109px;height:18px;line-height:21px;color:#000">0</div>
<div class="a" style="left:0;top:252px;width:1641px;height:1px;background:#B6AE8A"></div>
<div class="a" style="left:0;top:253px;width:1641px;height:18px;background:#F0FFFF"></div>
<svg style="left:3px;top:257px" width="16" height="9"><rect x="0.5" y="0.5" width="15" height="8" rx="1.5" fill="#C5DCF2" stroke="#6688AA"/><path d="M2.5,5.5 Q4,2 5.5,4.5 T9,4.5 L12.5,3.5" fill="none" stroke="#1A4C8A" stroke-width="1.1"/></svg>
<div class="a" style="left:31px;top:253px;width:182px;height:18px;background:#5168C5"></div>
<div class="t" style="left:35px;top:253px;width:178px;height:18px;line-height:21px;color:#fff;letter-spacing:-0.202px;">"COFFEE PREMIUM All Liss" - шаг<span class="el"></span></div>
<div class="t" style="left:218px;top:253px;width:133px;height:18px;line-height:21px;color:#22227C">Склад КЛИМОВСК</div>
<div class="t" style="left:353px;top:253px;width:54px;height:18px;line-height:21px;color:#22227C;text-align:right">0</div>
<div class="t" style="left:417px;top:253px;width:133px;height:18px;line-height:21px;color:#22227C">201-08-5</div>
<div class="t" style="left:556px;top:253px;width:109px;height:18px;line-height:21px;color:#22227C">63</div>
<div class="t" style="left:671px;top:253px;width:109px;height:18px;line-height:21px;color:#22227C">0</div>
<div class="t" style="left:786px;top:253px;width:109px;height:18px;line-height:21px;color:#22227C">2000000001517</div>
<div class="t" style="left:901px;top:253px;width:109px;height:18px;line-height:21px;color:#22227C">0</div>
<div class="t" style="left:1016px;top:253px;width:109px;height:18px;line-height:21px;color:#22227C">0</div>
<div class="t" style="left:1131px;top:253px;width:109px;height:18px;line-height:21px;color:#22227C">0</div>
<div class="a" style="left:0;top:271px;width:1641px;height:1px;background:#B6AE8A"></div>
<div class="a" style="left:0;top:272px;width:1641px;height:18px;background:#F0FFFF"></div>
<svg style="left:3px;top:276px" width="16" height="9"><rect x="0.5" y="0.5" width="15" height="8" rx="1.5" fill="#C5DCF2" stroke="#6688AA"/><path d="M2.5,5.5 Q4,2 5.5,4.5 T9,4.5 L12.5,3.5" fill="none" stroke="#1A4C8A" stroke-width="1.1"/></svg>
<div class="t" style="left:35px;top:272px;width:178px;height:18px;line-height:21px;color:#22227C;letter-spacing:-0.202px;">"COFFEE PREMIUM All Liss" - шаг<span class="el"></span></div>
<div class="t" style="left:218px;top:272px;width:133px;height:18px;line-height:21px;color:#22227C">Склад КЛИМОВСК</div>
<div class="t" style="left:353px;top:272px;width:54px;height:18px;line-height:21px;color:#22227C;text-align:right">0</div>
<div class="t" style="left:417px;top:272px;width:133px;height:18px;line-height:21px;color:#22227C">201-08-5</div>
<div class="t" style="left:556px;top:272px;width:109px;height:18px;line-height:21px;color:#22227C">20</div>
<div class="t" style="left:671px;top:272px;width:109px;height:18px;line-height:21px;color:#22227C">0</div>
<div class="t" style="left:786px;top:272px;width:109px;height:18px;line-height:21px;color:#22227C">4603783588251</div>
<div class="t" style="left:901px;top:272px;width:109px;height:18px;line-height:21px;color:#22227C">0</div>
<div class="t" style="left:1016px;top:272px;width:109px;height:18px;line-height:21px;color:#22227C">0</div>
<div class="t" style="left:1131px;top:272px;width:109px;height:18px;line-height:21px;color:#22227C">0</div>
<div class="a" style="left:0;top:290px;width:1641px;height:1px;background:#B6AE8A"></div>
<div class="a" style="left:0;top:291px;width:1641px;height:18px;background:#FFFFFF"></div>
<svg style="left:3px;top:295px" width="16" height="9"><rect x="0.5" y="0.5" width="15" height="8" rx="1.5" fill="#C5DCF2" stroke="#6688AA"/><path d="M2.5,5.5 Q4,2 5.5,4.5 T9,4.5 L12.5,3.5" fill="none" stroke="#1A4C8A" stroke-width="1.1"/></svg>
<div class="t" style="left:35px;top:291px;width:178px;height:18px;line-height:21px;color:#000;letter-spacing:-0.202px;">"COFFEE PREMIUM All Liss" - шаг<span class="el"></span></div>
<div class="t" style="left:218px;top:291px;width:133px;height:18px;line-height:21px;color:#000">Склад КЛИМОВСК</div>
<div class="t" style="left:353px;top:291px;width:54px;height:18px;line-height:21px;color:#000;text-align:right">1</div>
<div class="t" style="left:417px;top:291px;width:133px;height:18px;line-height:21px;color:#000">201-08-6</div>
<div class="t" style="left:556px;top:291px;width:109px;height:18px;line-height:21px;color:#000">20</div>
<div class="t" style="left:671px;top:291px;width:109px;height:18px;line-height:21px;color:#000">0</div>
<div class="t" style="left:786px;top:291px;width:109px;height:18px;line-height:21px;color:#000">4603783588251</div>
<div class="t" style="left:901px;top:291px;width:109px;height:18px;line-height:21px;color:#000">0</div>
<div class="t" style="left:1016px;top:291px;width:109px;height:18px;line-height:21px;color:#000">0</div>
<div class="t" style="left:1131px;top:291px;width:109px;height:18px;line-height:21px;color:#000">0</div>
<div class="a" style="left:0;top:309px;width:1641px;height:1px;background:#B6AE8A"></div>
<div class="a" style="left:0;top:310px;width:1641px;height:18px;background:#F0FFFF"></div>
<svg style="left:3px;top:314px" width="16" height="9"><rect x="0.5" y="0.5" width="15" height="8" rx="1.5" fill="#C5DCF2" stroke="#6688AA"/><path d="M2.5,5.5 Q4,2 5.5,4.5 T9,4.5 L12.5,3.5" fill="none" stroke="#1A4C8A" stroke-width="1.1"/></svg>
<div class="t" style="left:35px;top:310px;width:178px;height:18px;line-height:21px;color:#22227C;letter-spacing:-0.089px;">Набор для волос блонд BLONDE<span class="el"></span></div>
<div class="t" style="left:218px;top:310px;width:133px;height:18px;line-height:21px;color:#22227C">Склад КЛИМОВСК</div>
<div class="t" style="left:353px;top:310px;width:54px;height:18px;line-height:21px;color:#22227C;text-align:right">0</div>
<div class="t" style="left:417px;top:310px;width:133px;height:18px;line-height:21px;color:#22227C">1-02-26-2</div>
<div class="t" style="left:786px;top:310px;width:109px;height:18px;line-height:21px;color:#22227C">4603735134840</div>
<div class="t" style="left:901px;top:310px;width:109px;height:18px;line-height:21px;color:#22227C">0</div>
<div class="t" style="left:1016px;top:310px;width:109px;height:18px;line-height:21px;color:#22227C">0</div>
<div class="t" style="left:1131px;top:310px;width:109px;height:18px;line-height:21px;color:#22227C">0</div>
<div class="a" style="left:0;top:328px;width:1641px;height:1px;background:#B6AE8A"></div>
<div class="a" style="left:0;top:329px;width:1641px;height:18px;background:#F0FFFF"></div>
<svg style="left:3px;top:333px" width="16" height="9"><rect x="0.5" y="0.5" width="15" height="8" rx="1.5" fill="#C5DCF2" stroke="#6688AA"/><path d="M2.5,5.5 Q4,2 5.5,4.5 T9,4.5 L12.5,3.5" fill="none" stroke="#1A4C8A" stroke-width="1.1"/></svg>
<div class="t" style="left:35px;top:329px;width:178px;height:18px;line-height:21px;color:#22227C;">Шампунь "НОУ ВЕЙВС", 1 шаг, 2<span class="el"></span></div>
<div class="t" style="left:218px;top:329px;width:133px;height:18px;line-height:21px;color:#22227C">Склад КЛИМОВСК</div>
<div class="t" style="left:353px;top:329px;width:54px;height:18px;line-height:21px;color:#22227C;text-align:right">0</div>
<div class="t" style="left:417px;top:329px;width:133px;height:18px;line-height:21px;color:#22227C">1-06-05-1</div>
<div class="t" style="left:786px;top:329px;width:109px;height:18px;line-height:21px;color:#22227C">7898000223276</div>
<div class="t" style="left:901px;top:329px;width:109px;height:18px;line-height:21px;color:#22227C">0</div>
<div class="t" style="left:1016px;top:329px;width:109px;height:18px;line-height:21px;color:#22227C">0</div>
<div class="t" style="left:1131px;top:329px;width:109px;height:18px;line-height:21px;color:#22227C">0</div>
<div class="a" style="left:0;top:347px;width:1641px;height:1px;background:#B6AE8A"></div>
<div class="a" style="left:0;top:348px;width:1641px;height:18px;background:#F0FFFF"></div>
<svg style="left:3px;top:352px" width="16" height="9"><rect x="0.5" y="0.5" width="15" height="8" rx="1.5" fill="#C5DCF2" stroke="#6688AA"/><path d="M2.5,5.5 Q4,2 5.5,4.5 T9,4.5 L12.5,3.5" fill="none" stroke="#1A4C8A" stroke-width="1.1"/></svg>
<div class="t" style="left:35px;top:348px;width:178px;height:18px;line-height:21px;color:#22227C;">Шампунь "НОУ ВЕЙВС", 1 шаг, 1<span class="el"></span></div>
<div class="t" style="left:218px;top:348px;width:133px;height:18px;line-height:21px;color:#22227C">Склад КЛИМОВСК</div>
<div class="t" style="left:353px;top:348px;width:54px;height:18px;line-height:21px;color:#22227C;text-align:right">0</div>
<div class="t" style="left:417px;top:348px;width:133px;height:18px;line-height:21px;color:#22227C">201-21-4</div>
<div class="t" style="left:901px;top:348px;width:109px;height:18px;line-height:21px;color:#22227C">0</div>
<div class="t" style="left:1016px;top:348px;width:109px;height:18px;line-height:21px;color:#22227C">0</div>
<div class="t" style="left:1131px;top:348px;width:109px;height:18px;line-height:21px;color:#22227C">0</div>
<div class="a" style="left:0;top:366px;width:1641px;height:1px;background:#B6AE8A"></div>
<div class="a" style="left:0;top:367px;width:1641px;height:18px;background:#F0FFFF"></div>
<svg style="left:3px;top:371px" width="16" height="9"><rect x="0.5" y="0.5" width="15" height="8" rx="1.5" fill="#C5DCF2" stroke="#6688AA"/><path d="M2.5,5.5 Q4,2 5.5,4.5 T9,4.5 L12.5,3.5" fill="none" stroke="#1A4C8A" stroke-width="1.1"/></svg>
<div class="t" style="left:35px;top:367px;width:178px;height:18px;line-height:21px;color:#22227C;">Финализатор "FX Крим", 250 мл<span class="el"></span></div>
<div class="t" style="left:218px;top:367px;width:133px;height:18px;line-height:21px;color:#22227C">Склад КЛИМОВСК</div>
<div class="t" style="left:353px;top:367px;width:54px;height:18px;line-height:21px;color:#22227C;text-align:right">0</div>
<div class="t" style="left:417px;top:367px;width:133px;height:18px;line-height:21px;color:#22227C">1-10-06-1</div>
<div class="t" style="left:556px;top:367px;width:109px;height:18px;line-height:21px;color:#22227C">43</div>
<div class="t" style="left:671px;top:367px;width:109px;height:18px;line-height:21px;color:#22227C">0</div>
<div class="t" style="left:786px;top:367px;width:109px;height:18px;line-height:21px;color:#22227C">7899784000107</div>
<div class="t" style="left:901px;top:367px;width:109px;height:18px;line-height:21px;color:#22227C">0</div>
<div class="t" style="left:1016px;top:367px;width:109px;height:18px;line-height:21px;color:#22227C">0</div>
<div class="t" style="left:1131px;top:367px;width:109px;height:18px;line-height:21px;color:#22227C">0</div>
<div class="a" style="left:0;top:385px;width:1641px;height:1px;background:#B6AE8A"></div>
<div class="a" style="left:0;top:386px;width:1641px;height:18px;background:#F0FFFF"></div>
<svg style="left:3px;top:390px" width="16" height="9"><rect x="0.5" y="0.5" width="15" height="8" rx="1.5" fill="#C5DCF2" stroke="#6688AA"/><path d="M2.5,5.5 Q4,2 5.5,4.5 T9,4.5 L12.5,3.5" fill="none" stroke="#1A4C8A" stroke-width="1.1"/></svg>
<div class="t" style="left:35px;top:386px;width:178px;height:18px;line-height:21px;color:#22227C;">Шампунь "BOTOX ULTRA", 1 ша<span class="el"></span></div>
<div class="t" style="left:218px;top:386px;width:133px;height:18px;line-height:21px;color:#22227C">Склад КЛИМОВСК</div>
<div class="t" style="left:353px;top:386px;width:54px;height:18px;line-height:21px;color:#22227C;text-align:right">0</div>
<div class="t" style="left:417px;top:386px;width:133px;height:18px;line-height:21px;color:#22227C">201-21-4</div>
<div class="t" style="left:556px;top:386px;width:109px;height:18px;line-height:21px;color:#22227C">19</div>
<div class="t" style="left:671px;top:386px;width:109px;height:18px;line-height:21px;color:#22227C">0</div>
<div class="t" style="left:786px;top:386px;width:109px;height:18px;line-height:21px;color:#22227C">4603783587988</div>
<div class="t" style="left:901px;top:386px;width:109px;height:18px;line-height:21px;color:#22227C">0</div>
<div class="t" style="left:1016px;top:386px;width:109px;height:18px;line-height:21px;color:#22227C">0</div>
<div class="t" style="left:1131px;top:386px;width:109px;height:18px;line-height:21px;color:#22227C">0</div>
<div class="a" style="left:0;top:404px;width:1641px;height:1px;background:#B6AE8A"></div>
<div class="a" style="left:0;top:405px;width:1641px;height:18px;background:#F0FFFF"></div>
<svg style="left:3px;top:409px" width="16" height="9"><rect x="0.5" y="0.5" width="15" height="8" rx="1.5" fill="#C5DCF2" stroke="#6688AA"/><path d="M2.5,5.5 Q4,2 5.5,4.5 T9,4.5 L12.5,3.5" fill="none" stroke="#1A4C8A" stroke-width="1.1"/></svg>
<div class="t" style="left:35px;top:405px;width:178px;height:18px;line-height:21px;color:#22227C;">Шампунь "BOTOX ULTRA", 1 ша<span class="el"></span></div>
<div class="t" style="left:218px;top:405px;width:133px;height:18px;line-height:21px;color:#22227C">Склад КЛИМОВСК</div>
<div class="t" style="left:353px;top:405px;width:54px;height:18px;line-height:21px;color:#22227C;text-align:right">0</div>
<div class="t" style="left:417px;top:405px;width:133px;height:18px;line-height:21px;color:#22227C">1-03-03-1</div>
<div class="t" style="left:556px;top:405px;width:109px;height:18px;line-height:21px;color:#22227C">813</div>
<div class="t" style="left:671px;top:405px;width:109px;height:18px;line-height:21px;color:#22227C">1</div>
<div class="t" style="left:786px;top:405px;width:109px;height:18px;line-height:21px;color:#22227C">4603735133058</div>
<div class="t" style="left:901px;top:405px;width:109px;height:18px;line-height:21px;color:#22227C">0</div>
<div class="t" style="left:1016px;top:405px;width:109px;height:18px;line-height:21px;color:#22227C">0</div>
<div class="t" style="left:1131px;top:405px;width:109px;height:18px;line-height:21px;color:#22227C">0</div>
<div class="a" style="left:0;top:423px;width:1641px;height:1px;background:#B6AE8A"></div>
<div class="a" style="left:0;top:424px;width:1641px;height:18px;background:#FFFFFF"></div>
<svg style="left:3px;top:428px" width="16" height="9"><rect x="0.5" y="0.5" width="15" height="8" rx="1.5" fill="#C5DCF2" stroke="#6688AA"/><path d="M2.5,5.5 Q4,2 5.5,4.5 T9,4.5 L12.5,3.5" fill="none" stroke="#1A4C8A" stroke-width="1.1"/></svg>
<div class="t" style="left:35px;top:424px;width:178px;height:18px;line-height:21px;color:#000;">Шампунь "BOTOX ULTRA", 1 ша<span class="el"></span></div>
<div class="t" style="left:218px;top:424px;width:133px;height:18px;line-height:21px;color:#000">Склад КЛИМОВСК</div>
<div class="t" style="left:353px;top:424px;width:54px;height:18px;line-height:21px;color:#000;text-align:right">1</div>
<div class="t" style="left:417px;top:424px;width:133px;height:18px;line-height:21px;color:#000">1-12-03-3</div>
<div class="t" style="left:556px;top:424px;width:109px;height:18px;line-height:21px;color:#000">813</div>
<div class="t" style="left:671px;top:424px;width:109px;height:18px;line-height:21px;color:#000">1</div>
<div class="t" style="left:786px;top:424px;width:109px;height:18px;line-height:21px;color:#000">4603735133058</div>
<div class="t" style="left:901px;top:424px;width:109px;height:18px;line-height:21px;color:#000">0</div>
<div class="t" style="left:1016px;top:424px;width:109px;height:18px;line-height:21px;color:#000">0</div>
<div class="t" style="left:1131px;top:424px;width:109px;height:18px;line-height:21px;color:#000">0</div>
<div class="a" style="left:0;top:442px;width:1641px;height:1px;background:#B6AE8A"></div>
<div class="a" style="left:0;top:443px;width:1641px;height:18px;background:#FFFFFF"></div>
<svg style="left:3px;top:447px" width="16" height="9"><rect x="0.5" y="0.5" width="15" height="8" rx="1.5" fill="#C5DCF2" stroke="#6688AA"/><path d="M2.5,5.5 Q4,2 5.5,4.5 T9,4.5 L12.5,3.5" fill="none" stroke="#1A4C8A" stroke-width="1.1"/></svg>
<div class="t" style="left:35px;top:443px;width:178px;height:18px;line-height:21px;color:#000;">Шампунь "BOTOX ULTRA", 1 ша<span class="el"></span></div>
<div class="t" style="left:218px;top:443px;width:133px;height:18px;line-height:21px;color:#000">Склад КЛИМОВСК</div>
<div class="t" style="left:353px;top:443px;width:54px;height:18px;line-height:21px;color:#000;text-align:right">2</div>
<div class="t" style="left:417px;top:443px;width:133px;height:18px;line-height:21px;color:#000">1-14-12-2</div>
<div class="t" style="left:556px;top:443px;width:109px;height:18px;line-height:21px;color:#000">813</div>
<div class="t" style="left:671px;top:443px;width:109px;height:18px;line-height:21px;color:#000">1</div>
<div class="t" style="left:786px;top:443px;width:109px;height:18px;line-height:21px;color:#000">4603735133058</div>
<div class="t" style="left:901px;top:443px;width:109px;height:18px;line-height:21px;color:#000">0</div>
<div class="t" style="left:1016px;top:443px;width:109px;height:18px;line-height:21px;color:#000">0</div>
<div class="t" style="left:1131px;top:443px;width:109px;height:18px;line-height:21px;color:#000">0</div>
<div class="a" style="left:0;top:461px;width:1641px;height:1px;background:#B6AE8A"></div>
<div class="a" style="left:0;top:462px;width:1641px;height:18px;background:#F0FFFF"></div>
<svg style="left:3px;top:466px" width="16" height="9"><rect x="0.5" y="0.5" width="15" height="8" rx="1.5" fill="#C5DCF2" stroke="#6688AA"/><path d="M2.5,5.5 Q4,2 5.5,4.5 T9,4.5 L12.5,3.5" fill="none" stroke="#1A4C8A" stroke-width="1.1"/></svg>
<div class="t" style="left:35px;top:462px;width:178px;height:18px;line-height:21px;color:#22227C;">Маска "НОУ ВЕЙВС", 2 шаг, 100<span class="el"></span></div>
<div class="t" style="left:218px;top:462px;width:133px;height:18px;line-height:21px;color:#22227C">Склад КЛИМОВСК</div>
<div class="t" style="left:353px;top:462px;width:54px;height:18px;line-height:21px;color:#22227C;text-align:right">0</div>
<div class="t" style="left:417px;top:462px;width:133px;height:18px;line-height:21px;color:#22227C">201-21-4</div>
<div class="t" style="left:556px;top:462px;width:109px;height:18px;line-height:21px;color:#22227C">390</div>
<div class="t" style="left:671px;top:462px;width:109px;height:18px;line-height:21px;color:#22227C">0</div>
<div class="t" style="left:786px;top:462px;width:109px;height:18px;line-height:21px;color:#22227C">2000337062021</div>
<div class="t" style="left:901px;top:462px;width:109px;height:18px;line-height:21px;color:#22227C">0</div>
<div class="t" style="left:1016px;top:462px;width:109px;height:18px;line-height:21px;color:#22227C">0</div>
<div class="t" style="left:1131px;top:462px;width:109px;height:18px;line-height:21px;color:#22227C">0</div>
<div class="a" style="left:0;top:480px;width:1641px;height:1px;background:#B6AE8A"></div>
<div class="a" style="left:0;top:481px;width:1641px;height:18px;background:#F0FFFF"></div>
<svg style="left:3px;top:485px" width="16" height="9"><rect x="0.5" y="0.5" width="15" height="8" rx="1.5" fill="#C5DCF2" stroke="#6688AA"/><path d="M2.5,5.5 Q4,2 5.5,4.5 T9,4.5 L12.5,3.5" fill="none" stroke="#1A4C8A" stroke-width="1.1"/></svg>
<div class="t" style="left:35px;top:481px;width:178px;height:18px;line-height:21px;color:#22227C;letter-spacing:-0.202px;">"COFFEE PREMIUM All Liss" - шаг<span class="el"></span></div>
<div class="t" style="left:218px;top:481px;width:133px;height:18px;line-height:21px;color:#22227C">Склад КЛИМОВСК</div>
<div class="t" style="left:353px;top:481px;width:54px;height:18px;line-height:21px;color:#22227C;text-align:right">0</div>
<div class="t" style="left:417px;top:481px;width:133px;height:18px;line-height:21px;color:#22227C">202-06-1</div>
<div class="t" style="left:786px;top:481px;width:109px;height:18px;line-height:21px;color:#22227C">7898584460104</div>
<div class="t" style="left:901px;top:481px;width:109px;height:18px;line-height:21px;color:#22227C">0</div>
<div class="t" style="left:1016px;top:481px;width:109px;height:18px;line-height:21px;color:#22227C">0</div>
<div class="t" style="left:1131px;top:481px;width:109px;height:18px;line-height:21px;color:#22227C">0</div>
<div class="a" style="left:0;top:499px;width:1641px;height:1px;background:#B6AE8A"></div>
<div class="a" style="left:0;top:500px;width:1641px;height:18px;background:#F0FFFF"></div>
<svg style="left:3px;top:504px" width="16" height="9"><rect x="0.5" y="0.5" width="15" height="8" rx="1.5" fill="#C5DCF2" stroke="#6688AA"/><path d="M2.5,5.5 Q4,2 5.5,4.5 T9,4.5 L12.5,3.5" fill="none" stroke="#1A4C8A" stroke-width="1.1"/></svg>
<div class="t" style="left:35px;top:500px;width:178px;height:18px;line-height:21px;color:#22227C;letter-spacing:-0.202px;">"COFFEE PREMIUM All Liss" - шаг<span class="el"></span></div>
<div class="t" style="left:218px;top:500px;width:133px;height:18px;line-height:21px;color:#22227C">Склад КЛИМОВСК</div>
<div class="t" style="left:353px;top:500px;width:54px;height:18px;line-height:21px;color:#22227C;text-align:right">0</div>
<div class="t" style="left:417px;top:500px;width:133px;height:18px;line-height:21px;color:#22227C">202-08-2</div>
<div class="t" style="left:556px;top:500px;width:109px;height:18px;line-height:21px;color:#22227C">10</div>
<div class="t" style="left:671px;top:500px;width:109px;height:18px;line-height:21px;color:#22227C">0</div>
<div class="t" style="left:786px;top:500px;width:109px;height:18px;line-height:21px;color:#22227C">7898584460111</div>
<div class="t" style="left:901px;top:500px;width:109px;height:18px;line-height:21px;color:#22227C">0</div>
<div class="t" style="left:1016px;top:500px;width:109px;height:18px;line-height:21px;color:#22227C">0</div>
<div class="t" style="left:1131px;top:500px;width:109px;height:18px;line-height:21px;color:#22227C">0</div>
<div class="a" style="left:0;top:518px;width:1641px;height:1px;background:#B6AE8A"></div>
<div class="a" style="left:0;top:519px;width:1641px;height:18px;background:#FFFFFF"></div>
<svg style="left:3px;top:523px" width="16" height="9"><rect x="0.5" y="0.5" width="15" height="8" rx="1.5" fill="#C5DCF2" stroke="#6688AA"/><path d="M2.5,5.5 Q4,2 5.5,4.5 T9,4.5 L12.5,3.5" fill="none" stroke="#1A4C8A" stroke-width="1.1"/></svg>
<div class="t" style="left:35px;top:519px;width:178px;height:18px;line-height:21px;color:#000;letter-spacing:-0.030px;">"H-BRUSH Botox Capilar" - шаг 2 <span class="el"></span></div>
<div class="t" style="left:218px;top:519px;width:133px;height:18px;line-height:21px;color:#000">Склад КЛИМОВСК</div>
<div class="t" style="left:353px;top:519px;width:54px;height:18px;line-height:21px;color:#000;text-align:right">1</div>
<div class="t" style="left:417px;top:519px;width:133px;height:18px;line-height:21px;color:#000">1-01-22-3</div>
<div class="t" style="left:556px;top:519px;width:109px;height:18px;line-height:21px;color:#000">2</div>
<div class="t" style="left:671px;top:519px;width:109px;height:18px;line-height:21px;color:#000">0</div>
<div class="t" style="left:786px;top:519px;width:109px;height:18px;line-height:21px;color:#000">7898584460135</div>
<div class="t" style="left:901px;top:519px;width:109px;height:18px;line-height:21px;color:#000">0</div>
<div class="t" style="left:1016px;top:519px;width:109px;height:18px;line-height:21px;color:#000">0</div>
<div class="t" style="left:1131px;top:519px;width:109px;height:18px;line-height:21px;color:#000">0</div>
<div class="a" style="left:0;top:537px;width:1641px;height:1px;background:#B6AE8A"></div>
<div class="a" style="left:0;top:538px;width:1641px;height:18px;background:#F0FFFF"></div>
<svg style="left:3px;top:542px" width="16" height="9"><rect x="0.5" y="0.5" width="15" height="8" rx="1.5" fill="#C5DCF2" stroke="#6688AA"/><path d="M2.5,5.5 Q4,2 5.5,4.5 T9,4.5 L12.5,3.5" fill="none" stroke="#1A4C8A" stroke-width="1.1"/></svg>
<div class="t" style="left:35px;top:538px;width:178px;height:18px;line-height:21px;color:#22227C;letter-spacing:-0.202px;">"COFFEE PREMIUM All Liss" - шаг<span class="el"></span></div>
<div class="t" style="left:218px;top:538px;width:133px;height:18px;line-height:21px;color:#22227C">Склад КЛИМОВСК</div>
<div class="t" style="left:353px;top:538px;width:54px;height:18px;line-height:21px;color:#22227C;text-align:right">0</div>
<div class="t" style="left:417px;top:538px;width:133px;height:18px;line-height:21px;color:#22227C">1-01-22-3</div>
<div class="t" style="left:556px;top:538px;width:109px;height:18px;line-height:21px;color:#22227C">1</div>
<div class="t" style="left:671px;top:538px;width:109px;height:18px;line-height:21px;color:#22227C">0</div>
<div class="t" style="left:786px;top:538px;width:109px;height:18px;line-height:21px;color:#22227C">7898584460098</div>
<div class="t" style="left:901px;top:538px;width:109px;height:18px;line-height:21px;color:#22227C">0</div>
<div class="t" style="left:1016px;top:538px;width:109px;height:18px;line-height:21px;color:#22227C">0</div>
<div class="t" style="left:1131px;top:538px;width:109px;height:18px;line-height:21px;color:#22227C">0</div>
<div class="a" style="left:0;top:556px;width:1641px;height:1px;background:#B6AE8A"></div>
<div class="a" style="left:0;top:557px;width:1641px;height:18px;background:#F0FFFF"></div>
<svg style="left:3px;top:561px" width="16" height="9"><rect x="0.5" y="0.5" width="15" height="8" rx="1.5" fill="#C5DCF2" stroke="#6688AA"/><path d="M2.5,5.5 Q4,2 5.5,4.5 T9,4.5 L12.5,3.5" fill="none" stroke="#1A4C8A" stroke-width="1.1"/></svg>
<div class="t" style="left:35px;top:557px;width:178px;height:18px;line-height:21px;color:#22227C;">Микроскоп BB | ONE Technology <span class="el"></span></div>
<div class="t" style="left:218px;top:557px;width:133px;height:18px;line-height:21px;color:#22227C">Склад КЛИМОВСК</div>
<div class="t" style="left:353px;top:557px;width:54px;height:18px;line-height:21px;color:#22227C;text-align:right">0</div>
<div class="t" style="left:417px;top:557px;width:133px;height:18px;line-height:21px;color:#22227C">1-12-11-2</div>
<div class="t" style="left:556px;top:557px;width:109px;height:18px;line-height:21px;color:#22227C">143</div>
<div class="t" style="left:671px;top:557px;width:109px;height:18px;line-height:21px;color:#22227C">0</div>
<div class="t" style="left:786px;top:557px;width:109px;height:18px;line-height:21px;color:#22227C">4603735132624</div>
<div class="t" style="left:901px;top:557px;width:109px;height:18px;line-height:21px;color:#22227C">0</div>
<div class="t" style="left:1016px;top:557px;width:109px;height:18px;line-height:21px;color:#22227C">0</div>
<div class="t" style="left:1131px;top:557px;width:109px;height:18px;line-height:21px;color:#22227C">0</div>
<div class="a" style="left:0;top:575px;width:1641px;height:1px;background:#B6AE8A"></div>
<div class="a" style="left:0;top:576px;width:1641px;height:18px;background:#F0FFFF"></div>
<svg style="left:3px;top:580px" width="16" height="9"><rect x="0.5" y="0.5" width="15" height="8" rx="1.5" fill="#C5DCF2" stroke="#6688AA"/><path d="M2.5,5.5 Q4,2 5.5,4.5 T9,4.5 L12.5,3.5" fill="none" stroke="#1A4C8A" stroke-width="1.1"/></svg>
<div class="t" style="left:35px;top:576px;width:178px;height:18px;line-height:21px;color:#22227C;">"H-BRUSH Botox Capilar PINK" - <span class="el"></span></div>
<div class="t" style="left:218px;top:576px;width:133px;height:18px;line-height:21px;color:#22227C">Склад КЛИМОВСК</div>
<div class="t" style="left:353px;top:576px;width:54px;height:18px;line-height:21px;color:#22227C;text-align:right">0</div>
<div class="t" style="left:417px;top:576px;width:133px;height:18px;line-height:21px;color:#22227C">201-07-2</div>
<div class="t" style="left:556px;top:576px;width:109px;height:18px;line-height:21px;color:#22227C">17</div>
<div class="t" style="left:671px;top:576px;width:109px;height:18px;line-height:21px;color:#22227C">0</div>
<div class="t" style="left:786px;top:576px;width:109px;height:18px;line-height:21px;color:#22227C">4603735130354</div>
<div class="t" style="left:901px;top:576px;width:109px;height:18px;line-height:21px;color:#22227C">0</div>
<div class="t" style="left:1016px;top:576px;width:109px;height:18px;line-height:21px;color:#22227C">0</div>
<div class="t" style="left:1131px;top:576px;width:109px;height:18px;line-height:21px;color:#22227C">0</div>
<div class="a" style="left:0;top:594px;width:1641px;height:1px;background:#B6AE8A"></div>
<div class="a" style="left:0;top:595px;width:1641px;height:18px;background:#F0FFFF"></div>
<svg style="left:3px;top:599px" width="16" height="9"><rect x="0.5" y="0.5" width="15" height="8" rx="1.5" fill="#C5DCF2" stroke="#6688AA"/><path d="M2.5,5.5 Q4,2 5.5,4.5 T9,4.5 L12.5,3.5" fill="none" stroke="#1A4C8A" stroke-width="1.1"/></svg>
<div class="t" style="left:35px;top:595px;width:178px;height:18px;line-height:21px;color:#22227C;">"H-BRUSH Botox Capilar PINK" - <span class="el"></span></div>
<div class="t" style="left:218px;top:595px;width:133px;height:18px;line-height:21px;color:#22227C">Склад КЛИМОВСК</div>
<div class="t" style="left:353px;top:595px;width:54px;height:18px;line-height:21px;color:#22227C;text-align:right">0</div>
<div class="t" style="left:417px;top:595px;width:133px;height:18px;line-height:21px;color:#22227C">202-09-2</div>
<div class="t" style="left:556px;top:595px;width:109px;height:18px;line-height:21px;color:#22227C">7</div>
<div class="t" style="left:671px;top:595px;width:109px;height:18px;line-height:21px;color:#22227C">0</div>
<div class="t" style="left:786px;top:595px;width:109px;height:18px;line-height:21px;color:#22227C">4603735130323</div>
<div class="t" style="left:901px;top:595px;width:109px;height:18px;line-height:21px;color:#22227C">0</div>
<div class="t" style="left:1016px;top:595px;width:109px;height:18px;line-height:21px;color:#22227C">0</div>
<div class="t" style="left:1131px;top:595px;width:109px;height:18px;line-height:21px;color:#22227C">0</div>
<div class="a" style="left:0;top:613px;width:1641px;height:1px;background:#B6AE8A"></div>
<div class="a" style="left:0;top:614px;width:1641px;height:18px;background:#F0FFFF"></div>
<svg style="left:3px;top:618px" width="16" height="9"><rect x="0.5" y="0.5" width="15" height="8" rx="1.5" fill="#C5DCF2" stroke="#6688AA"/><path d="M2.5,5.5 Q4,2 5.5,4.5 T9,4.5 L12.5,3.5" fill="none" stroke="#1A4C8A" stroke-width="1.1"/></svg>
<div class="t" style="left:35px;top:614px;width:178px;height:18px;line-height:21px;color:#22227C;letter-spacing:-0.202px;">"COFFEE PREMIUM All Liss" - шаг<span class="el"></span></div>
<div class="t" style="left:218px;top:614px;width:133px;height:18px;line-height:21px;color:#22227C">Склад КЛИМОВСК</div>
<div class="t" style="left:353px;top:614px;width:54px;height:18px;line-height:21px;color:#22227C;text-align:right">0</div>
<div class="t" style="left:417px;top:614px;width:133px;height:18px;line-height:21px;color:#22227C">201-08-5</div>
<div class="t" style="left:556px;top:614px;width:109px;height:18px;line-height:21px;color:#22227C">21</div>
<div class="t" style="left:671px;top:614px;width:109px;height:18px;line-height:21px;color:#22227C">0</div>
<div class="t" style="left:786px;top:614px;width:109px;height:18px;line-height:21px;color:#22227C">4603783588268</div>
<div class="t" style="left:901px;top:614px;width:109px;height:18px;line-height:21px;color:#22227C">0</div>
<div class="t" style="left:1016px;top:614px;width:109px;height:18px;line-height:21px;color:#22227C">0</div>
<div class="t" style="left:1131px;top:614px;width:109px;height:18px;line-height:21px;color:#22227C">0</div>
<div class="a" style="left:0;top:632px;width:1641px;height:1px;background:#B6AE8A"></div>
<div class="a" style="left:0;top:633px;width:1641px;height:18px;background:#F0FFFF"></div>
<svg style="left:3px;top:637px" width="16" height="9"><rect x="0.5" y="0.5" width="15" height="8" rx="1.5" fill="#C5DCF2" stroke="#6688AA"/><path d="M2.5,5.5 Q4,2 5.5,4.5 T9,4.5 L12.5,3.5" fill="none" stroke="#1A4C8A" stroke-width="1.1"/></svg>
<div class="t" style="left:35px;top:633px;width:178px;height:18px;line-height:21px;color:#22227C;">700 Миска DEMI COLOR CUP</div>
<div class="t" style="left:218px;top:633px;width:133px;height:18px;line-height:21px;color:#22227C">Склад КЛИМОВСК</div>
<div class="t" style="left:353px;top:633px;width:54px;height:18px;line-height:21px;color:#22227C;text-align:right">0</div>
<div class="t" style="left:417px;top:633px;width:133px;height:18px;line-height:21px;color:#22227C">1-04-06-2</div>
<div class="t" style="left:556px;top:633px;width:109px;height:18px;line-height:21px;color:#22227C">104</div>
<div class="t" style="left:671px;top:633px;width:109px;height:18px;line-height:21px;color:#22227C">0</div>
<div class="t" style="left:786px;top:633px;width:109px;height:18px;line-height:21px;color:#22227C">4526603007001</div>
<div class="t" style="left:901px;top:633px;width:109px;height:18px;line-height:21px;color:#22227C">0</div>
<div class="t" style="left:1016px;top:633px;width:109px;height:18px;line-height:21px;color:#22227C">0</div>
<div class="t" style="left:1131px;top:633px;width:109px;height:18px;line-height:21px;color:#22227C">0</div>
<div class="a" style="left:0;top:651px;width:1641px;height:1px;background:#B6AE8A"></div>
<div class="a" style="left:0;top:652px;width:1641px;height:18px;background:#F0FFFF"></div>
<svg style="left:3px;top:656px" width="16" height="9"><rect x="0.5" y="0.5" width="15" height="8" rx="1.5" fill="#C5DCF2" stroke="#6688AA"/><path d="M2.5,5.5 Q4,2 5.5,4.5 T9,4.5 L12.5,3.5" fill="none" stroke="#1A4C8A" stroke-width="1.1"/></svg>
<div class="t" style="left:35px;top:652px;width:178px;height:18px;line-height:21px;color:#22227C;letter-spacing:-0.090px;">Банка_kerarganic ПЭТ коричнева<span class="el"></span></div>
<div class="t" style="left:218px;top:652px;width:133px;height:18px;line-height:21px;color:#22227C">Склад КЛИМОВСК</div>
<div class="t" style="left:353px;top:652px;width:54px;height:18px;line-height:21px;color:#22227C;text-align:right">0</div>
<div class="t" style="left:417px;top:652px;width:133px;height:18px;line-height:21px;color:#22227C">607</div>
<div class="t" style="left:901px;top:652px;width:109px;height:18px;line-height:21px;color:#22227C">0</div>
<div class="t" style="left:1016px;top:652px;width:109px;height:18px;line-height:21px;color:#22227C">0</div>
<div class="t" style="left:1131px;top:652px;width:109px;height:18px;line-height:21px;color:#22227C">0</div>
<div class="a" style="left:0;top:670px;width:1641px;height:1px;background:#B6AE8A"></div>
<div class="a" style="left:0;top:671px;width:1641px;height:18px;background:#F0FFFF"></div>
<svg style="left:3px;top:675px" width="16" height="9"><rect x="0.5" y="0.5" width="15" height="8" rx="1.5" fill="#C5DCF2" stroke="#6688AA"/><path d="M2.5,5.5 Q4,2 5.5,4.5 T9,4.5 L12.5,3.5" fill="none" stroke="#1A4C8A" stroke-width="1.1"/></svg>
<div class="t" style="left:35px;top:671px;width:178px;height:18px;line-height:21px;color:#22227C;">975 Кейс для маски HAIR SEAS<span class="el"></span></div>
<div class="t" style="left:218px;top:671px;width:133px;height:18px;line-height:21px;color:#22227C">Склад КЛИМОВСК</div>
<div class="t" style="left:353px;top:671px;width:54px;height:18px;line-height:21px;color:#22227C;text-align:right">0</div>
<div class="t" style="left:417px;top:671px;width:133px;height:18px;line-height:21px;color:#22227C">1-03-18-1</div>
<div class="t" style="left:556px;top:671px;width:109px;height:18px;line-height:21px;color:#22227C">56</div>
<div class="t" style="left:671px;top:671px;width:109px;height:18px;line-height:21px;color:#22227C">0</div>
<div class="t" style="left:786px;top:671px;width:109px;height:18px;line-height:21px;color:#22227C">4526603009753</div>
<div class="t" style="left:901px;top:671px;width:109px;height:18px;line-height:21px;color:#22227C">0</div>
<div class="t" style="left:1016px;top:671px;width:109px;height:18px;line-height:21px;color:#22227C">0</div>
<div class="t" style="left:1131px;top:671px;width:109px;height:18px;line-height:21px;color:#22227C">0</div>
<div class="a" style="left:0;top:689px;width:1641px;height:1px;background:#B6AE8A"></div>
<div class="a" style="left:0;top:690px;width:1641px;height:18px;background:#F0FFFF"></div>
<svg style="left:3px;top:694px" width="16" height="9"><rect x="0.5" y="0.5" width="15" height="8" rx="1.5" fill="#C5DCF2" stroke="#6688AA"/><path d="M2.5,5.5 Q4,2 5.5,4.5 T9,4.5 L12.5,3.5" fill="none" stroke="#1A4C8A" stroke-width="1.1"/></svg>
<div class="t" style="left:35px;top:690px;width:178px;height:18px;line-height:21px;color:#22227C;">976 Кейс для маски HAIR SEAS<span class="el"></span></div>
<div class="t" style="left:218px;top:690px;width:133px;height:18px;line-height:21px;color:#22227C">Склад КЛИМОВСК</div>
<div class="t" style="left:353px;top:690px;width:54px;height:18px;line-height:21px;color:#22227C;text-align:right">0</div>
<div class="t" style="left:417px;top:690px;width:133px;height:18px;line-height:21px;color:#22227C">1-03-25-1</div>
<div class="t" style="left:556px;top:690px;width:109px;height:18px;line-height:21px;color:#22227C">32</div>
<div class="t" style="left:671px;top:690px;width:109px;height:18px;line-height:21px;color:#22227C">0</div>
<div class="t" style="left:786px;top:690px;width:109px;height:18px;line-height:21px;color:#22227C">4526603009760</div>
<div class="t" style="left:901px;top:690px;width:109px;height:18px;line-height:21px;color:#22227C">0</div>
<div class="t" style="left:1016px;top:690px;width:109px;height:18px;line-height:21px;color:#22227C">0</div>
<div class="t" style="left:1131px;top:690px;width:109px;height:18px;line-height:21px;color:#22227C">0</div>
<div class="a" style="left:0;top:708px;width:1641px;height:1px;background:#B6AE8A"></div>
<div class="a" style="left:0;top:709px;width:1641px;height:18px;background:#F0FFFF"></div>
<svg style="left:3px;top:713px" width="16" height="9"><rect x="0.5" y="0.5" width="15" height="8" rx="1.5" fill="#C5DCF2" stroke="#6688AA"/><path d="M2.5,5.5 Q4,2 5.5,4.5 T9,4.5 L12.5,3.5" fill="none" stroke="#1A4C8A" stroke-width="1.1"/></svg>
<div class="t" style="left:35px;top:709px;width:178px;height:18px;line-height:21px;color:#22227C;">"H-BRUSH Botox Capilar PINK" - <span class="el"></span></div>
<div class="t" style="left:218px;top:709px;width:133px;height:18px;line-height:21px;color:#22227C">Склад КЛИМОВСК</div>
<div class="t" style="left:353px;top:709px;width:54px;height:18px;line-height:21px;color:#22227C;text-align:right">0</div>
<div class="t" style="left:417px;top:709px;width:133px;height:18px;line-height:21px;color:#22227C">202-03-1</div>
<div class="t" style="left:556px;top:709px;width:109px;height:18px;line-height:21px;color:#22227C">23</div>
<div class="t" style="left:671px;top:709px;width:109px;height:18px;line-height:21px;color:#22227C">0</div>
<div class="t" style="left:786px;top:709px;width:109px;height:18px;line-height:21px;color:#22227C">7898584462931</div>
<div class="t" style="left:901px;top:709px;width:109px;height:18px;line-height:21px;color:#22227C">0</div>
<div class="t" style="left:1016px;top:709px;width:109px;height:18px;line-height:21px;color:#22227C">0</div>
<div class="t" style="left:1131px;top:709px;width:109px;height:18px;line-height:21px;color:#22227C">0</div>
<div class="a" style="left:0;top:727px;width:1641px;height:1px;background:#B6AE8A"></div>
<div class="a" style="left:0;top:728px;width:1641px;height:18px;background:#F0FFFF"></div>
<svg style="left:3px;top:732px" width="16" height="9"><rect x="0.5" y="0.5" width="15" height="8" rx="1.5" fill="#C5DCF2" stroke="#6688AA"/><path d="M2.5,5.5 Q4,2 5.5,4.5 T9,4.5 L12.5,3.5" fill="none" stroke="#1A4C8A" stroke-width="1.1"/></svg>
<div class="t" style="left:35px;top:728px;width:178px;height:18px;line-height:21px;color:#22227C;letter-spacing:-0.005px;">"PLAST HAIR bixyplastia" - шаг 2 <span class="el"></span></div>
<div class="t" style="left:218px;top:728px;width:133px;height:18px;line-height:21px;color:#22227C">Склад КЛИМОВСК</div>
<div class="t" style="left:353px;top:728px;width:54px;height:18px;line-height:21px;color:#22227C;text-align:right">0</div>
<div class="t" style="left:417px;top:728px;width:133px;height:18px;line-height:21px;color:#22227C">202-05-2</div>
<div class="t" style="left:556px;top:728px;width:109px;height:18px;line-height:21px;color:#22227C">16</div>
<div class="t" style="left:671px;top:728px;width:109px;height:18px;line-height:21px;color:#22227C">0</div>
<div class="t" style="left:786px;top:728px;width:109px;height:18px;line-height:21px;color:#22227C">7898584461774</div>
<div class="t" style="left:901px;top:728px;width:109px;height:18px;line-height:21px;color:#22227C">0</div>
<div class="t" style="left:1016px;top:728px;width:109px;height:18px;line-height:21px;color:#22227C">0</div>
<div class="t" style="left:1131px;top:728px;width:109px;height:18px;line-height:21px;color:#22227C">0</div>
<div class="a" style="left:0;top:746px;width:1641px;height:1px;background:#B6AE8A"></div>
<div class="a" style="left:0;top:747px;width:1641px;height:18px;background:#F0FFFF"></div>
<svg style="left:3px;top:751px" width="16" height="9"><rect x="0.5" y="0.5" width="15" height="8" rx="1.5" fill="#C5DCF2" stroke="#6688AA"/><path d="M2.5,5.5 Q4,2 5.5,4.5 T9,4.5 L12.5,3.5" fill="none" stroke="#1A4C8A" stroke-width="1.1"/></svg>
<div class="t" style="left:35px;top:747px;width:178px;height:18px;line-height:21px;color:#22227C;letter-spacing:-0.005px;">"PLAST HAIR bixyplastia" - шаг 1 <span class="el"></span></div>
<div class="t" style="left:218px;top:747px;width:133px;height:18px;line-height:21px;color:#22227C">Склад КЛИМОВСК</div>
<div class="t" style="left:353px;top:747px;width:54px;height:18px;line-height:21px;color:#22227C;text-align:right">0</div>
<div class="t" style="left:417px;top:747px;width:133px;height:18px;line-height:21px;color:#22227C">202-04-2</div>
<div class="t" style="left:556px;top:747px;width:109px;height:18px;line-height:21px;color:#22227C">133</div>
<div class="t" style="left:671px;top:747px;width:109px;height:18px;line-height:21px;color:#22227C">0</div>
<div class="t" style="left:786px;top:747px;width:109px;height:18px;line-height:21px;color:#22227C">7898584461743</div>
<div class="t" style="left:901px;top:747px;width:109px;height:18px;line-height:21px;color:#22227C">0</div>
<div class="t" style="left:1016px;top:747px;width:109px;height:18px;line-height:21px;color:#22227C">0</div>
<div class="t" style="left:1131px;top:747px;width:109px;height:18px;line-height:21px;color:#22227C">0</div>
<div class="a" style="left:0;top:765px;width:1641px;height:1px;background:#B6AE8A"></div>
<div class="a" style="left:0;top:766px;width:1641px;height:18px;background:#FFFFFF"></div>
<svg style="left:3px;top:770px" width="16" height="9"><rect x="0.5" y="0.5" width="15" height="8" rx="1.5" fill="#C5DCF2" stroke="#6688AA"/><path d="M2.5,5.5 Q4,2 5.5,4.5 T9,4.5 L12.5,3.5" fill="none" stroke="#1A4C8A" stroke-width="1.1"/></svg>
<div class="t" style="left:35px;top:766px;width:178px;height:18px;line-height:21px;color:#000;letter-spacing:-0.005px;">"PLAST HAIR bixyplastia" - шаг 1 <span class="el"></span></div>
<div class="t" style="left:218px;top:766px;width:133px;height:18px;line-height:21px;color:#000">Склад КЛИМОВСК</div>
<div class="t" style="left:353px;top:766px;width:54px;height:18px;line-height:21px;color:#000;text-align:right">1</div>
<div class="t" style="left:417px;top:766px;width:133px;height:18px;line-height:21px;color:#000">202-04-4</div>
<div class="t" style="left:556px;top:766px;width:109px;height:18px;line-height:21px;color:#000">133</div>
<div class="t" style="left:671px;top:766px;width:109px;height:18px;line-height:21px;color:#000">0</div>
<div class="t" style="left:786px;top:766px;width:109px;height:18px;line-height:21px;color:#000">7898584461743</div>
<div class="t" style="left:901px;top:766px;width:109px;height:18px;line-height:21px;color:#000">0</div>
<div class="t" style="left:1016px;top:766px;width:109px;height:18px;line-height:21px;color:#000">0</div>
<div class="t" style="left:1131px;top:766px;width:109px;height:18px;line-height:21px;color:#000">0</div>
<div class="a" style="left:0;top:784px;width:1641px;height:1px;background:#B6AE8A"></div>
<div class="a" style="left:0;top:785px;width:1641px;height:18px;background:#F0FFFF"></div>
<svg style="left:3px;top:789px" width="16" height="9"><rect x="0.5" y="0.5" width="15" height="8" rx="1.5" fill="#C5DCF2" stroke="#6688AA"/><path d="M2.5,5.5 Q4,2 5.5,4.5 T9,4.5 L12.5,3.5" fill="none" stroke="#1A4C8A" stroke-width="1.1"/></svg>
<div class="t" style="left:35px;top:785px;width:178px;height:18px;line-height:21px;color:#22227C;letter-spacing:-0.152px;">CELL FLEX bond protect #1 Protec<span class="el"></span></div>
<div class="t" style="left:218px;top:785px;width:133px;height:18px;line-height:21px;color:#22227C">Склад КЛИМОВСК</div>
<div class="t" style="left:353px;top:785px;width:54px;height:18px;line-height:21px;color:#22227C;text-align:right">0</div>
<div class="t" style="left:417px;top:785px;width:133px;height:18px;line-height:21px;color:#22227C">1-13-25-3</div>
<div class="t" style="left:556px;top:785px;width:109px;height:18px;line-height:21px;color:#22227C">0</div>
<div class="t" style="left:671px;top:785px;width:109px;height:18px;line-height:21px;color:#22227C">-1</div>
<div class="t" style="left:786px;top:785px;width:109px;height:18px;line-height:21px;color:#22227C">8003720116091</div>
<div class="t" style="left:901px;top:785px;width:109px;height:18px;line-height:21px;color:#22227C">0</div>
<div class="t" style="left:1016px;top:785px;width:109px;height:18px;line-height:21px;color:#22227C">0</div>
<div class="t" style="left:1131px;top:785px;width:109px;height:18px;line-height:21px;color:#22227C">0</div>
<div class="a" style="left:0;top:803px;width:1641px;height:1px;background:#B6AE8A"></div>
<div class="a" style="left:0;top:804px;width:1641px;height:18px;background:#F0FFFF"></div>
<svg style="left:3px;top:808px" width="16" height="9"><rect x="0.5" y="0.5" width="15" height="8" rx="1.5" fill="#C5DCF2" stroke="#6688AA"/><path d="M2.5,5.5 Q4,2 5.5,4.5 T9,4.5 L12.5,3.5" fill="none" stroke="#1A4C8A" stroke-width="1.1"/></svg>
<div class="t" style="left:35px;top:804px;width:178px;height:18px;line-height:21px;color:#22227C;letter-spacing:-0.166px;">CELL FLEX bond protect #2 Fixing,<span class="el"></span></div>
<div class="t" style="left:218px;top:804px;width:133px;height:18px;line-height:21px;color:#22227C">Склад КЛИМОВСК</div>
<div class="t" style="left:353px;top:804px;width:54px;height:18px;line-height:21px;color:#22227C;text-align:right">0</div>
<div class="t" style="left:417px;top:804px;width:133px;height:18px;line-height:21px;color:#22227C">1-13-25-3</div>
<div class="t" style="left:556px;top:804px;width:109px;height:18px;line-height:21px;color:#22227C">18</div>
<div class="t" style="left:671px;top:804px;width:109px;height:18px;line-height:21px;color:#22227C">-1</div>
<div class="t" style="left:786px;top:804px;width:109px;height:18px;line-height:21px;color:#22227C">8003720116107</div>
<div class="t" style="left:901px;top:804px;width:109px;height:18px;line-height:21px;color:#22227C">0</div>
<div class="t" style="left:1016px;top:804px;width:109px;height:18px;line-height:21px;color:#22227C">0</div>
<div class="t" style="left:1131px;top:804px;width:109px;height:18px;line-height:21px;color:#22227C">0</div>
<div class="a" style="left:0;top:822px;width:1641px;height:1px;background:#B6AE8A"></div>
<div class="a" style="left:0;top:823px;width:1641px;height:18px;background:#F0FFFF"></div>
<svg style="left:3px;top:827px" width="16" height="9"><rect x="0.5" y="0.5" width="15" height="8" rx="1.5" fill="#C5DCF2" stroke="#6688AA"/><path d="M2.5,5.5 Q4,2 5.5,4.5 T9,4.5 L12.5,3.5" fill="none" stroke="#1A4C8A" stroke-width="1.1"/></svg>
<div class="t" style="left:35px;top:823px;width:178px;height:18px;line-height:21px;color:#22227C;letter-spacing:-0.097px;">CELL FLEX bond protect #3 Care, <span class="el"></span></div>
<div class="t" style="left:218px;top:823px;width:133px;height:18px;line-height:21px;color:#22227C">Склад КЛИМОВСК</div>
<div class="t" style="left:353px;top:823px;width:54px;height:18px;line-height:21px;color:#22227C;text-align:right">0</div>
<div class="t" style="left:417px;top:823px;width:133px;height:18px;line-height:21px;color:#22227C">1-13-25-3</div>
<div class="t" style="left:556px;top:823px;width:109px;height:18px;line-height:21px;color:#22227C">178</div>
<div class="t" style="left:671px;top:823px;width:109px;height:18px;line-height:21px;color:#22227C">0</div>
<div class="t" style="left:786px;top:823px;width:109px;height:18px;line-height:21px;color:#22227C">8003720116114</div>
<div class="t" style="left:901px;top:823px;width:109px;height:18px;line-height:21px;color:#22227C">0</div>
<div class="t" style="left:1016px;top:823px;width:109px;height:18px;line-height:21px;color:#22227C">0</div>
<div class="t" style="left:1131px;top:823px;width:109px;height:18px;line-height:21px;color:#22227C">0</div>
<div class="a" style="left:0;top:841px;width:1641px;height:1px;background:#B6AE8A"></div>
<div class="a" style="left:0;top:842px;width:1641px;height:18px;background:#F0FFFF"></div>
<svg style="left:3px;top:846px" width="16" height="9"><rect x="0.5" y="0.5" width="15" height="8" rx="1.5" fill="#C5DCF2" stroke="#6688AA"/><path d="M2.5,5.5 Q4,2 5.5,4.5 T9,4.5 L12.5,3.5" fill="none" stroke="#1A4C8A" stroke-width="1.1"/></svg>
<div class="t" style="left:35px;top:842px;width:178px;height:18px;line-height:21px;color:#22227C;">Фильтр для вытяжки BB | One</div>
<div class="t" style="left:218px;top:842px;width:133px;height:18px;line-height:21px;color:#22227C">Склад КЛИМОВСК</div>
<div class="t" style="left:353px;top:842px;width:54px;height:18px;line-height:21px;color:#22227C;text-align:right">0</div>
<div class="t" style="left:417px;top:842px;width:133px;height:18px;line-height:21px;color:#22227C">1-12-08-3</div>
<div class="t" style="left:556px;top:842px;width:109px;height:18px;line-height:21px;color:#22227C">407</div>
<div class="t" style="left:671px;top:842px;width:109px;height:18px;line-height:21px;color:#22227C">2</div>
<div class="t" style="left:786px;top:842px;width:109px;height:18px;line-height:21px;color:#22227C">2000340281785</div>
<div class="t" style="left:901px;top:842px;width:109px;height:18px;line-height:21px;color:#22227C">0</div>
<div class="t" style="left:1016px;top:842px;width:109px;height:18px;line-height:21px;color:#22227C">0</div>
<div class="t" style="left:1131px;top:842px;width:109px;height:18px;line-height:21px;color:#22227C">0</div>
<div class="a" style="left:0;top:860px;width:1641px;height:1px;background:#B6AE8A"></div>
<div class="a" style="left:0;top:861px;width:1641px;height:18px;background:#FFFFFF"></div>
<svg style="left:3px;top:865px" width="16" height="9"><rect x="0.5" y="0.5" width="15" height="8" rx="1.5" fill="#C5DCF2" stroke="#6688AA"/><path d="M2.5,5.5 Q4,2 5.5,4.5 T9,4.5 L12.5,3.5" fill="none" stroke="#1A4C8A" stroke-width="1.1"/></svg>
<div class="t" style="left:35px;top:861px;width:178px;height:18px;line-height:21px;color:#000;">Фильтр для вытяжки BB | One</div>
<div class="t" style="left:218px;top:861px;width:133px;height:18px;line-height:21px;color:#000">Склад КЛИМОВСК</div>
<div class="t" style="left:353px;top:861px;width:54px;height:18px;line-height:21px;color:#000;text-align:right">1</div>
<div class="t" style="left:417px;top:861px;width:133px;height:18px;line-height:21px;color:#000">1-11-24-2</div>
<div class="t" style="left:556px;top:861px;width:109px;height:18px;line-height:21px;color:#000">407</div>
<div class="t" style="left:671px;top:861px;width:109px;height:18px;line-height:21px;color:#000">2</div>
<div class="t" style="left:786px;top:861px;width:109px;height:18px;line-height:21px;color:#000">2000340281785</div>
<div class="t" style="left:901px;top:861px;width:109px;height:18px;line-height:21px;color:#000">0</div>
<div class="t" style="left:1016px;top:861px;width:109px;height:18px;line-height:21px;color:#000">0</div>
<div class="t" style="left:1131px;top:861px;width:109px;height:18px;line-height:21px;color:#000">0</div>
<div class="a" style="left:0;top:879px;width:1641px;height:1px;background:#B6AE8A"></div>
<div class="a" style="left:0;top:880px;width:1641px;height:18px;background:#FFFFFF"></div>
<svg style="left:3px;top:884px" width="16" height="9"><rect x="0.5" y="0.5" width="15" height="8" rx="1.5" fill="#C5DCF2" stroke="#6688AA"/><path d="M2.5,5.5 Q4,2 5.5,4.5 T9,4.5 L12.5,3.5" fill="none" stroke="#1A4C8A" stroke-width="1.1"/></svg>
<div class="t" style="left:35px;top:880px;width:178px;height:18px;line-height:21px;color:#000;">Фильтр для вытяжки BB | One</div>
<div class="t" style="left:218px;top:880px;width:133px;height:18px;line-height:21px;color:#000">Склад КЛИМОВСК</div>
<div class="t" style="left:353px;top:880px;width:54px;height:18px;line-height:21px;color:#000;text-align:right">2</div>
<div class="t" style="left:417px;top:880px;width:133px;height:18px;line-height:21px;color:#000">1-13-13-3</div>
<div class="t" style="left:556px;top:880px;width:109px;height:18px;line-height:21px;color:#000">407</div>
<div class="t" style="left:671px;top:880px;width:109px;height:18px;line-height:21px;color:#000">2</div>
<div class="t" style="left:786px;top:880px;width:109px;height:18px;line-height:21px;color:#000">2000340281785</div>
<div class="t" style="left:901px;top:880px;width:109px;height:18px;line-height:21px;color:#000">0</div>
<div class="t" style="left:1016px;top:880px;width:109px;height:18px;line-height:21px;color:#000">0</div>
<div class="t" style="left:1131px;top:880px;width:109px;height:18px;line-height:21px;color:#000">0</div>
<div class="a" style="left:0;top:898px;width:1641px;height:1px;background:#B6AE8A"></div>
<div class="a" style="left:0;top:899px;width:1641px;height:18px;background:#FFFFFF"></div>
<svg style="left:3px;top:903px" width="16" height="9"><rect x="0.5" y="0.5" width="15" height="8" rx="1.5" fill="#C5DCF2" stroke="#6688AA"/><path d="M2.5,5.5 Q4,2 5.5,4.5 T9,4.5 L12.5,3.5" fill="none" stroke="#1A4C8A" stroke-width="1.1"/></svg>
<div class="t" style="left:35px;top:899px;width:178px;height:18px;line-height:21px;color:#000;">Фильтр для вытяжки BB | One</div>
<div class="t" style="left:218px;top:899px;width:133px;height:18px;line-height:21px;color:#000">Склад КЛИМОВСК</div>
<div class="t" style="left:353px;top:899px;width:54px;height:18px;line-height:21px;color:#000;text-align:right">3</div>
<div class="t" style="left:417px;top:899px;width:133px;height:18px;line-height:21px;color:#000">1-06-21-1</div>
<div class="t" style="left:556px;top:899px;width:109px;height:18px;line-height:21px;color:#000">407</div>
<div class="t" style="left:671px;top:899px;width:109px;height:18px;line-height:21px;color:#000">2</div>
<div class="t" style="left:786px;top:899px;width:109px;height:18px;line-height:21px;color:#000">2000340281785</div>
<div class="t" style="left:901px;top:899px;width:109px;height:18px;line-height:21px;color:#000">0</div>
<div class="t" style="left:1016px;top:899px;width:109px;height:18px;line-height:21px;color:#000">0</div>
<div class="t" style="left:1131px;top:899px;width:109px;height:18px;line-height:21px;color:#000">0</div>
<div class="a" style="left:0;top:917px;width:1641px;height:1px;background:#B6AE8A"></div>
<div class="a" style="left:0;top:918px;width:1641px;height:18px;background:#F0FFFF"></div>
<svg style="left:3px;top:922px" width="16" height="9"><rect x="0.5" y="0.5" width="15" height="8" rx="1.5" fill="#C5DCF2" stroke="#6688AA"/><path d="M2.5,5.5 Q4,2 5.5,4.5 T9,4.5 L12.5,3.5" fill="none" stroke="#1A4C8A" stroke-width="1.1"/></svg>
<div class="t" style="left:35px;top:918px;width:178px;height:18px;line-height:21px;color:#22227C;letter-spacing:-0.054px;">NOVEMBER RAIN Очищающий к<span class="el"></span></div>
<div class="t" style="left:218px;top:918px;width:133px;height:18px;line-height:21px;color:#22227C">Склад КЛИМОВСК</div>
<div class="t" style="left:353px;top:918px;width:54px;height:18px;line-height:21px;color:#22227C;text-align:right">0</div>
<div class="t" style="left:417px;top:918px;width:133px;height:18px;line-height:21px;color:#22227C">1-02-23-1</div>
<div class="t" style="left:556px;top:918px;width:109px;height:18px;line-height:21px;color:#22227C">0</div>
<div class="t" style="left:671px;top:918px;width:109px;height:18px;line-height:21px;color:#22227C">1</div>
<div class="t" style="left:786px;top:918px;width:109px;height:18px;line-height:21px;color:#22227C">2000337062083</div>
<div class="t" style="left:901px;top:918px;width:109px;height:18px;line-height:21px;color:#22227C">0</div>
<div class="t" style="left:1016px;top:918px;width:109px;height:18px;line-height:21px;color:#22227C">0</div>
<div class="t" style="left:1131px;top:918px;width:109px;height:18px;line-height:21px;color:#22227C">0</div>
<div class="a" style="left:0;top:936px;width:1641px;height:1px;background:#B6AE8A"></div>
<div class="a" style="left:0;top:937px;width:1641px;height:18px;background:#F0FFFF"></div>
<svg style="left:3px;top:941px" width="16" height="9"><rect x="0.5" y="0.5" width="15" height="8" rx="1.5" fill="#C5DCF2" stroke="#6688AA"/><path d="M2.5,5.5 Q4,2 5.5,4.5 T9,4.5 L12.5,3.5" fill="none" stroke="#1A4C8A" stroke-width="1.1"/></svg>
<div class="t" style="left:35px;top:937px;width:178px;height:18px;line-height:21px;color:#22227C;letter-spacing:-0.030px;">"H-BRUSH Botox Capilar" - шаг 1 <span class="el"></span></div>
<div class="t" style="left:218px;top:937px;width:133px;height:18px;line-height:21px;color:#22227C">Склад КЛИМОВСК</div>
<div class="t" style="left:353px;top:937px;width:54px;height:18px;line-height:21px;color:#22227C;text-align:right">0</div>
<div class="t" style="left:417px;top:937px;width:133px;height:18px;line-height:21px;color:#22227C">201-07-2</div>
<div class="t" style="left:556px;top:937px;width:109px;height:18px;line-height:21px;color:#22227C">38</div>
<div class="t" style="left:671px;top:937px;width:109px;height:18px;line-height:21px;color:#22227C">0</div>
<div class="t" style="left:786px;top:937px;width:109px;height:18px;line-height:21px;color:#22227C">4603735134499</div>
<div class="t" style="left:901px;top:937px;width:109px;height:18px;line-height:21px;color:#22227C">0</div>
<div class="t" style="left:1016px;top:937px;width:109px;height:18px;line-height:21px;color:#22227C">0</div>
<div class="t" style="left:1131px;top:937px;width:109px;height:18px;line-height:21px;color:#22227C">0</div>
<div class="a" style="left:0;top:955px;width:1641px;height:1px;background:#B6AE8A"></div>
<div class="a" style="left:30px;top:156px;width:1px;height:800px;background:#B6AE8A"></div>
<div class="a" style="left:213px;top:156px;width:1px;height:800px;background:#B6AE8A"></div>
<div class="a" style="left:352px;top:156px;width:1px;height:800px;background:#B6AE8A"></div>
<div class="a" style="left:412px;top:156px;width:1px;height:800px;background:#B6AE8A"></div>
<div class="a" style="left:551px;top:156px;width:1px;height:800px;background:#B6AE8A"></div>
<div class="a" style="left:666px;top:156px;width:1px;height:800px;background:#B6AE8A"></div>
<div class="a" style="left:781px;top:156px;width:1px;height:800px;background:#B6AE8A"></div>
<div class="a" style="left:896px;top:156px;width:1px;height:800px;background:#B6AE8A"></div>
<div class="a" style="left:1011px;top:156px;width:1px;height:800px;background:#B6AE8A"></div>
<div class="a" style="left:1126px;top:156px;width:1px;height:800px;background:#B6AE8A"></div>
<div class="a" style="left:1241px;top:156px;width:1px;height:800px;background:#B6AE8A"></div>
<div class="a" style="left:1417px;top:156px;width:1px;height:800px;background:#B6AE8A"></div>
<div class="a" style="left:1528px;top:156px;width:1px;height:800px;background:#B6AE8A"></div>
<div class="a" style="left:1641px;top:156px;width:1px;height:800px;background:#B6AE8A"></div>
<div class="a" style="left:0;top:955px;width:1657px;height:2px;background:#B6AE8A"></div>
<div class="a" style="left:1642px;top:156px;width:15px;height:799px;background:#F8F6EF"></div>
<div class="a" style="left:1642px;top:156px;width:15px;height:20px;background:linear-gradient(90deg,#FBFAF2,#F2EEDA 70%,#E2DCC0)"></div>
<div class="a" style="left:1642px;top:176px;width:15px;height:1px;background:#B6AE8A"></div>
<svg style="left:1644px;top:160px" width="10" height="10"><path d="M1,8 H9 L5,1.5Z" fill="#8A8A8A"/></svg>
<div class="a" style="left:1642px;top:935px;width:15px;height:1px;background:#B6AE8A"></div>
<div class="a" style="left:1642px;top:936px;width:15px;height:19px;background:linear-gradient(90deg,#FBFAF2,#F2EEDA 70%,#E2DCC0)"></div>
<svg style="left:1644px;top:941px" width="10" height="10"><path d="M1,1.5 H9 L5,8Z" fill="#6E6E6E"/></svg>
<div class="a" style="left:1642px;top:548px;width:15px;height:1px;background:#B6AE8A"></div>
<div class="a" style="left:1642px;top:549px;width:15px;height:14px;background:linear-gradient(90deg,#FBFAF2,#F0ECD4 60%,#E2DCC0)"></div>
<div class="a" style="left:1642px;top:563px;width:15px;height:1px;background:#B6AE8A"></div>
<svg style="left:1646px;top:552px" width="8" height="8"><circle cx="4" cy="4" r="2.6" fill="#D9D4C2"/></svg>
<div class="a" style="left:0;top:957px;width:1657px;height:8px;background:#FEFAEF"></div>
<div class="a" style="left:0;top:965px;width:1657px;height:1px;background:#E4E2E6"></div>
<div class="a" style="left:-10px;top:968px;width:171px;height:20px;background:#B4B4B4;border:1px solid #C2B68E"></div>
<svg style="left:-8px;top:971px" width="14" height="14"><rect x="0.5" y="0.5" width="12" height="13" fill="#fff" stroke="#8A9AB0"/><circle cx="9" cy="6" r="3" fill="#F0A818"/><circle cx="9" cy="10" r="3" fill="#F0B828"/></svg>
<div class="t" style="left:8px;top:969px;width:150px;height:19px;line-height:20px;color:#1E1E28">Список  Товары на складах <span class="el"></span></div>
<div class="a" style="left:162px;top:968px;width:173px;height:20px;background:#B4B4B4;border:1px solid #C2B68E"></div>
<svg style="left:166px;top:970px" width="13" height="15"><rect x="0.5" y="0.5" width="12" height="13" fill="#fff" stroke="#7A8A9A"/><rect x="1" y="1" width="11" height="3" fill="#8CCB5A"/><path d="M1,7 H12 M1,10 H12 M4.5,1 V13 M8.5,1 V13" stroke="#6A9A6A"/></svg>
<div class="t" style="left:181px;top:969px;width:151px;height:19px;line-height:20px;color:#1E1E28">Места хранения номенклат<span class="el"></span></div>
<div class="a" style="left:336px;top:968px;width:171px;height:20px;background:#B8D0E8;border:1px solid #C2B68E"></div>
<svg style="left:340px;top:970px" width="13" height="15"><rect x="0.5" y="0.5" width="11" height="14" fill="#fff" stroke="#7A8AA0"/><path d="M3,4.5 H9 M3,7.5 H9 M3,10.5 H9" stroke="#A8B8C8"/></svg>
<div class="t" style="left:354px;top:969px;width:150px;height:19px;line-height:20px;color:#1E1E28">Поступления товаров и услуг</div>
<div class="a" style="left:508px;top:968px;width:172px;height:20px;background:#B4B4B4;border:1px solid #C2B68E"></div>
<svg style="left:512px;top:970px" width="13" height="15"><rect x="0.5" y="0.5" width="11" height="14" fill="#fff" stroke="#7A8AA0"/><path d="M3,4.5 H9 M3,7.5 H9 M3,10.5 H9" stroke="#A8B8C8"/></svg>
<div class="t" style="left:526px;top:969px;width:151px;height:19px;line-height:20px;color:#1E1E28">Поступление товаров и услу<span class="el"></span></div>
</body></html>
